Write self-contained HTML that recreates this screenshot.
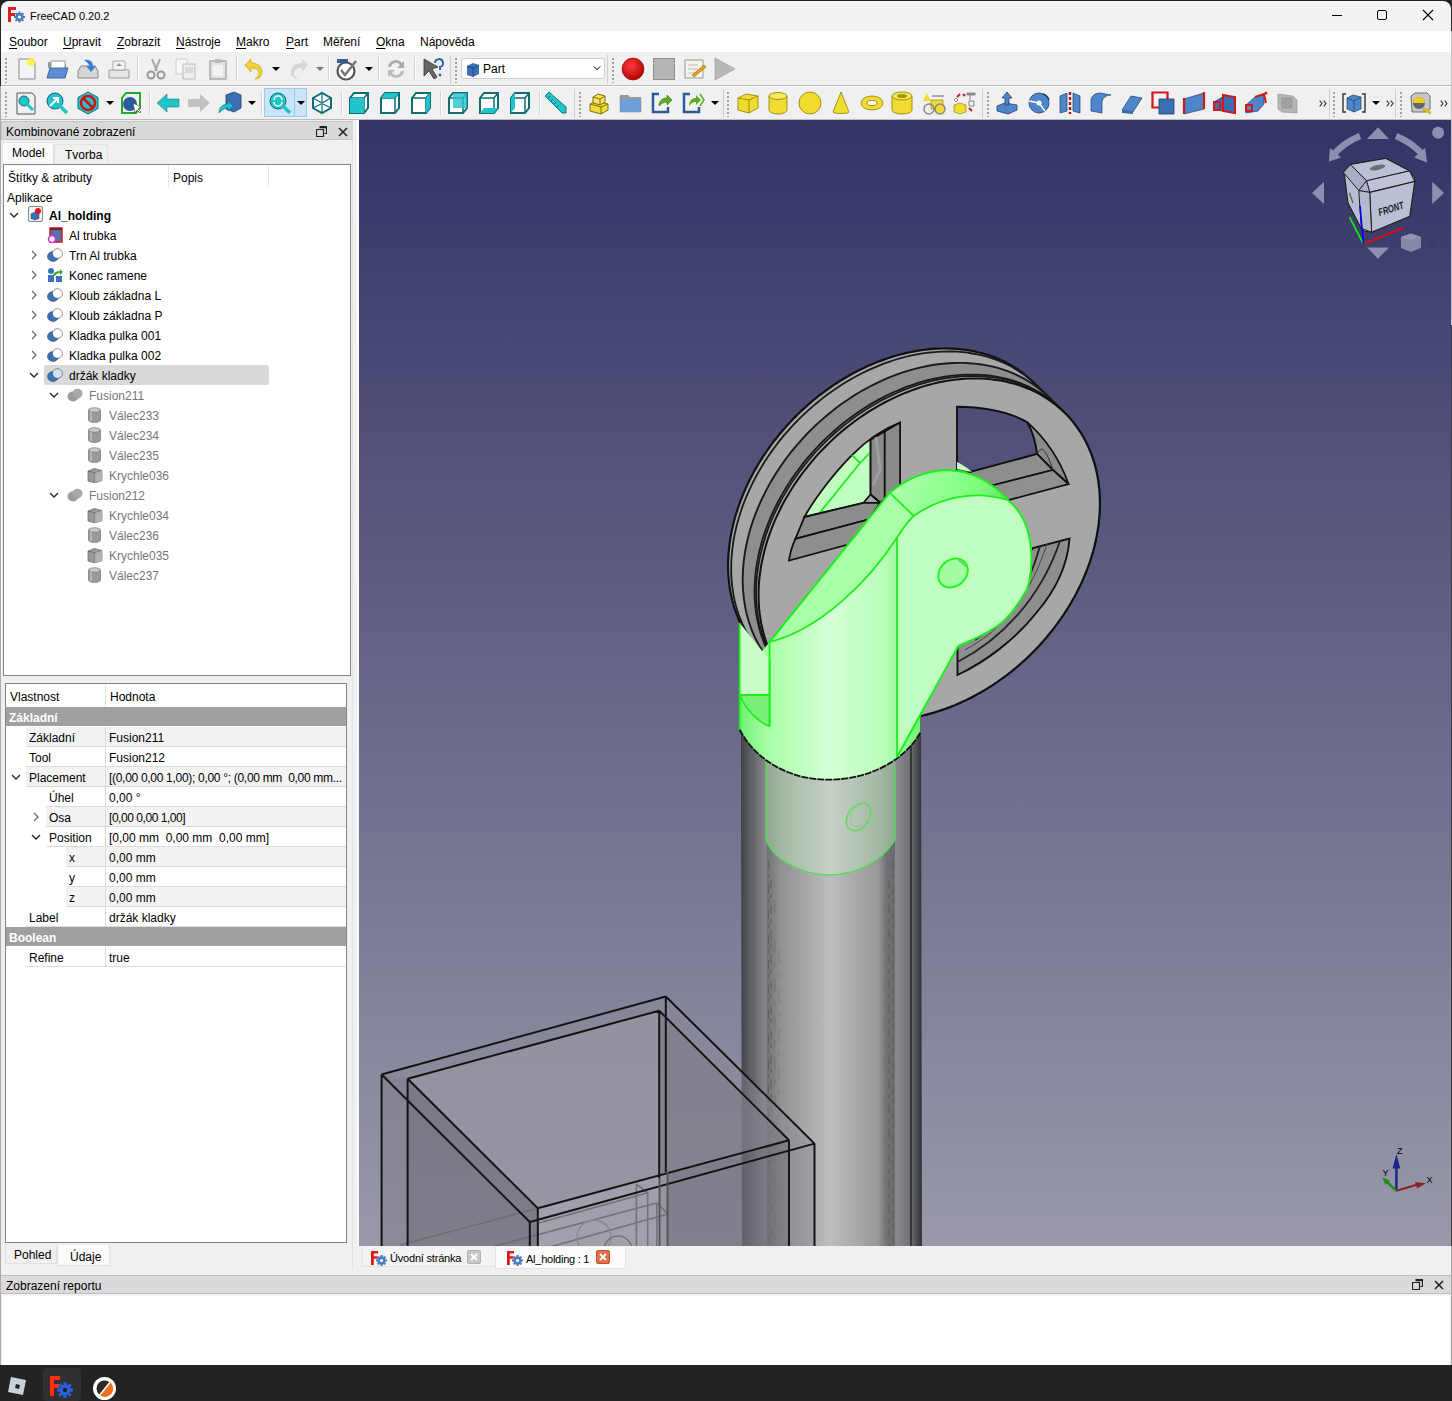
<!DOCTYPE html>
<html><head><meta charset="utf-8">
<style>
*{margin:0;padding:0;box-sizing:border-box}
html,body{width:1452px;height:1401px;overflow:hidden;background:#232323;font-family:"Liberation Sans",sans-serif;font-size:12px;color:#000}
.a{position:absolute}
#win{left:0;top:0;width:1452px;height:1365px;background:#f0f0f0;border-radius:8px 8px 0 0}
.u{text-decoration:underline;text-underline-offset:1.5px;text-decoration-thickness:1px}
.mi{top:4px;font-size:12px;line-height:14px;white-space:nowrap}
.grip{width:2px;background:repeating-linear-gradient(#f0f0f0 0 2px,#a0a0a0 2px 4px)}
.t{font-size:12px;line-height:14px;white-space:nowrap}
</style></head><body>
<div id="win" class="a">
<div class="a" style="left:0;top:0;width:1452px;height:31px;background:#1e1e24"></div><div class="a" style="left:1px;top:1px;width:1450px;height:30px;background:#f3f3f3;border-radius:8px 8px 0 0"></div>
<svg class="a" style="left:7px;top:6px" width="18" height="17" viewBox="0 0 18 17"><path d="M1 1h8v3H4v3h4v3H4v6H1z" fill="#d91f1f"/><g transform="translate(12.5 11)"><circle r="4.2" fill="#4a7cc0"/><path d="M0-5.5v2M0 5.5v-2M-5.5 0h2M5.5 0h-2M-3.9-3.9l1.4 1.4M3.9 3.9l-1.4-1.4M-3.9 3.9l1.4-1.4M3.9-3.9l-1.4 1.4" stroke="#4a7cc0" stroke-width="2"/><circle r="1.6" fill="#fff"/></g></svg>
<div class="a t" style="left:30px;top:9px;font-size:11px">FreeCAD 0.20.2</div>
<div class="a" style="left:1332px;top:15px;width:10px;height:1px;background:#000"></div>
<div class="a" style="left:1377px;top:10px;width:10px;height:10px;border:1px solid #000;border-radius:2px"></div>
<svg class="a" style="left:1422px;top:9px" width="12" height="12"><path d="M1 1L11 11M11 1L1 11" stroke="#000" stroke-width="1.1"/></svg>
<div class="a" style="left:1px;top:31px;width:1450px;height:21px;background:#fff"></div>
<span class="a mi" style="left:9px;top:35px"><span class="u">S</span>oubor</span>
<span class="a mi" style="left:63px;top:35px"><span class="u">U</span>pravit</span>
<span class="a mi" style="left:117px;top:35px"><span class="u">Z</span>obrazit</span>
<span class="a mi" style="left:176px;top:35px"><span class="u">N</span>ástroje</span>
<span class="a mi" style="left:236px;top:35px"><span class="u">M</span>akro</span>
<span class="a mi" style="left:286px;top:35px"><span class="u">P</span>art</span>
<span class="a mi" style="left:323px;top:35px">Měření</span>
<span class="a mi" style="left:376px;top:35px"><span class="u">O</span>kna</span>
<span class="a mi" style="left:420px;top:35px">Nápověda</span>
<div class="a" style="left:0px;top:52px;width:1452px;height:1px;background:#f0f0f0"></div>
<div class="a" style="left:0px;top:53px;width:1452px;height:32px;background:#f0f0f0"></div>
<div class="a" style="left:0px;top:85px;width:1452px;height:1px;background:#bababa"></div>
<div class="a" style="left:0px;top:86px;width:1452px;height:1px;background:#fff"></div>
<div class="a" style="left:0px;top:87px;width:1452px;height:32px;background:#f0f0f0"></div>
<div class="a" style="left:0px;top:119px;width:1452px;height:1px;background:#bababa"></div>
<div class="a grip" style="left:5px;top:56px;height:27px"></div>
<div class="a grip" style="left:5px;top:90px;height:27px"></div>
<svg class="a" style="left:14.7px;top:56.5px" width="24" height="24" viewBox="0 0 24 24"><path d="M4 2h13l3 3v17H4z" fill="#f4f4f4" stroke="#8a8a8a"/><circle cx="16" cy="5" r="4" fill="#ffee33" opacity=".85"/></svg>
<svg class="a" style="left:44.8px;top:56.5px" width="24" height="24" viewBox="0 0 24 24"><path d="M3 5h7l2 2h9v4H3z" fill="#9a9a9a"/><path d="M6 4h14v8H6z" fill="#fff" stroke="#999"/><path d="M2 21l3-10h18l-3 10z" fill="#5b8fd4" stroke="#3a6ab0"/></svg>
<svg class="a" style="left:75.8px;top:56.5px" width="24" height="24" viewBox="0 0 24 24"><path d="M2 14l3-5h14l3 5v7H2z" fill="#d5d5d5" stroke="#888"/><path d="M8 3c6-1 9 2 9 6h3l-5 6-5-6h3c0-2-2-4-5-6z" fill="#3f7fd0"/></svg>
<svg class="a" style="left:106.8px;top:56.5px" width="24" height="24" viewBox="0 0 24 24"><path d="M2 13h20v8H2z" fill="#e6e6e6" stroke="#999"/><path d="M6 4h12v9H6z" fill="#f4f4f4" stroke="#aaa"/><path d="M12 6l3 3h-6z" fill="#999"/></svg>
<div class="a" style="left:137px;top:57px;width:1px;height:24px;background:#d0d0d0;box-shadow:1px 0 0 #fff"></div>
<svg class="a" style="left:144.0px;top:56.5px" width="24" height="24" viewBox="0 0 24 24"><path d="M8 2l5 12M16 2l-5 12" stroke="#aaa" stroke-width="2"/><circle cx="7" cy="18" r="3.5" fill="none" stroke="#999" stroke-width="2"/><circle cx="17" cy="18" r="3.5" fill="none" stroke="#999" stroke-width="2"/></svg>
<svg class="a" style="left:174.4px;top:56.5px" width="24" height="24" viewBox="0 0 24 24"><path d="M2 2h11v15H2z" fill="#f6f6f6" stroke="#ccc"/><path d="M9 7h12v15H9z" fill="#eee" stroke="#bbb"/><path d="M11 10h8v6h-8z" fill="#d9d9d9"/></svg>
<svg class="a" style="left:205.8px;top:56.5px" width="24" height="24" viewBox="0 0 24 24"><path d="M4 4h16v18H4z" fill="#e2e2e2" stroke="#aaa" stroke-width="1.5"/><path d="M9 2h6v4H9z" fill="#bbb"/><path d="M7 8h10v11H7z" fill="#f2f2f2"/></svg>
<div class="a" style="left:236px;top:57px;width:1px;height:24px;background:#d0d0d0;box-shadow:1px 0 0 #fff"></div>
<svg class="a" style="left:242.0px;top:56.5px" width="24" height="24" viewBox="0 0 24 24"><path d="M3 8l6-6v4c7 0 11 4 11 9 0 4-3 7-7 7 3-2 4-4 4-6 0-3-3-5-8-5v4z" fill="#f0d040" stroke="#c9a800" stroke-width=".7"/></svg>
<svg class="a" style="left:272px;top:66.5px" width="8" height="4"><path d="M0 0h8L4 4z" fill="#000"/></svg>
<svg class="a" style="left:286.5px;top:56.5px" width="24" height="24" viewBox="0 0 24 24"><path d="M21 8l-6-6v4c-7 0-11 4-11 9 0 4 3 7 7 7-3-2-4-4-4-6 0-3 3-5 8-5v4z" fill="#d6d6d6"/></svg>
<svg class="a" style="left:315.6px;top:66.5px" width="8" height="4"><path d="M0 0h8L4 4z" fill="#777"/></svg>
<div class="a" style="left:328px;top:57px;width:1px;height:24px;background:#d0d0d0;box-shadow:1px 0 0 #fff"></div>
<svg class="a" style="left:335.0px;top:56.5px" width="24" height="24" viewBox="0 0 24 24"><circle cx="11" cy="14" r="8.5" fill="#fff" stroke="#555" stroke-width="2.2"/><path d="M6 13l4 5 11-14" stroke="#777" stroke-width="2.5" fill="none"/><path d="M2 2h11v4H2z" fill="#2f5d9a"/></svg>
<svg class="a" style="left:364.7px;top:66.5px" width="8" height="4"><path d="M0 0h8L4 4z" fill="#000"/></svg>
<div class="a" style="left:377.7px;top:57px;width:1px;height:24px;background:#d0d0d0;box-shadow:1px 0 0 #fff"></div>
<svg class="a" style="left:384.0px;top:56.5px" width="24" height="24" viewBox="0 0 24 24"><path d="M4 10a8 8 0 0 1 14-4l2-2v7h-7l3-3a5 5 0 0 0-9 2z" fill="#aaa"/><path d="M20 14a8 8 0 0 1-14 4l-2 2v-7h7l-3 3a5 5 0 0 0 9-2z" fill="#bbb"/></svg>
<div class="a" style="left:414.4px;top:57px;width:1px;height:24px;background:#d0d0d0;box-shadow:1px 0 0 #fff"></div>
<svg class="a" style="left:420.6px;top:56.5px" width="24" height="24" viewBox="0 0 24 24"><path d="M3 2l14 8-6 2 5 8-3 2-5-8-5 5z" fill="#666" stroke="#333" stroke-width=".8"/><path d="M14 6a4 4 0 1 1 5 4v3" stroke="#2f66b3" stroke-width="2" fill="none"/><circle cx="19" cy="18" r="1.4" fill="#2f66b3"/></svg>
<div class="a" style="left:450px;top:55px;width:1px;height:29px;background:#cfcfcf"></div>
<div class="a grip" style="left:455px;top:56px;height:27px"></div>
<div class="a" style="left:461px;top:58px;width:144px;height:21px;background:#fff;border:1px solid #cdcdcd;border-radius:3px"></div>
<svg class="a" style="left:465.0px;top:60.5px" width="16" height="16" viewBox="0 0 16 16"><path d="M2 5l6-3 6 2v9l-6 3-6-2z" fill="#3b6fb6"/><path d="M2 5l6 2 6-3M8 7v9" stroke="#1d3f73" fill="none" stroke-width=".8"/></svg>
<div class="a" style="left:483px;top:62px;font-size:12px">Part</div>
<svg class="a" style="left:592.5px;top:65.5px" width="8" height="6"><path d="M0.5 0.5L4 4L7.5 0.5M1 0.5L4 3.5L7 0.5" stroke="#555" fill="none" stroke-width="1"/></svg>
<div class="a" style="left:607px;top:55px;width:1px;height:29px;background:#cfcfcf"></div>
<div class="a grip" style="left:612px;top:56px;height:27px"></div>
<svg class="a" style="left:620.8px;top:56.5px" width="24" height="24" viewBox="0 0 24 24"><defs><radialGradient id="rg1" cx=".4" cy=".35" r=".7"><stop offset="0" stop-color="#ff3a3a"/><stop offset="1" stop-color="#b00000"/></radialGradient></defs><circle cx="12" cy="12" r="11" fill="url(#rg1)" stroke="#900" stroke-width=".6"/></svg>
<svg class="a" style="left:651.7px;top:56.5px" width="24" height="24" viewBox="0 0 24 24"><rect x="1.5" y="1.5" width="21" height="21" fill="#b5b5b5" stroke="#8f8f8f"/></svg>
<svg class="a" style="left:682.8px;top:56.5px" width="24" height="24" viewBox="0 0 24 24"><path d="M2 3h18v18H2z" fill="#f5f3ea" stroke="#999"/><path d="M5 8h10M5 12h10M5 16h8" stroke="#bbb"/><path d="M9 18l12-10 2 2-12 10z" fill="#e8a020" stroke="#a06000" stroke-width=".6"/></svg>
<svg class="a" style="left:713.0px;top:56.5px" width="24" height="24" viewBox="0 0 24 24"><path d="M2 1l20 11-20 11z" fill="#b8b8b8" stroke="#999" stroke-width=".6"/></svg>
<svg class="a" style="left:14.0px;top:90.5px" width="24" height="24" viewBox="0 0 24 24"><path d="M3 2h15l3 3v18H3z" fill="#f0f0ee" stroke="#555"/><circle cx="10" cy="10" r="5" fill="#22c4cc" stroke="#0f6d73"/><path d="M13 13l6 6" stroke="#22c4cc" stroke-width="3"/></svg>
<svg class="a" style="left:45.0px;top:90.5px" width="24" height="24" viewBox="0 0 24 24"><circle cx="10" cy="10" r="8" fill="#22c4cc" stroke="#0f6d73" stroke-width="1"/><path d="M15 15l7 7" stroke="#22c4cc" stroke-width="3.5"/><path d="M5 15l8-8M8 7h5v5" stroke="#fff" stroke-width="2" fill="none"/></svg>
<svg class="a" style="left:76.0px;top:90.5px" width="24" height="24" viewBox="0 0 24 24"><path d="M12 1l10 5.5v11L12 23 2 17.5v-11z" fill="#22c4cc" stroke="#0f6d73"/><circle cx="12" cy="12" r="7" fill="none" stroke="#d01010" stroke-width="2.5"/><path d="M7 7l10 10" stroke="#d01010" stroke-width="2.5"/></svg>
<svg class="a" style="left:105.8px;top:100.5px" width="8" height="4"><path d="M0 0h8L4 4z" fill="#000"/></svg>
<svg class="a" style="left:119.0px;top:90.5px" width="24" height="24" viewBox="0 0 24 24"><path d="M3 7l4-5h14v15l-4 5H3z" fill="none" stroke="#22aa22" stroke-width="2"/><circle cx="11" cy="13" r="7" fill="#2a5aa0"/><path d="M14 12l2 10 2-3 3 3 1-1-3-3 3-2z" fill="#fff" stroke="#333" stroke-width=".6"/></svg>
<div class="a" style="left:149.4px;top:91px;width:1px;height:24px;background:#d0d0d0;box-shadow:1px 0 0 #fff"></div>
<svg class="a" style="left:156.0px;top:90.5px" width="24" height="24" viewBox="0 0 24 24"><path d="M1 12l10-9v5h12v8H11v5z" fill="#22c4cc" stroke="#0f6d73" stroke-width=".5"/></svg>
<svg class="a" style="left:187.0px;top:90.5px" width="24" height="24" viewBox="0 0 24 24"><path d="M23 12l-10-9v5H1v8h12v5z" fill="#c2c2c2"/></svg>
<svg class="a" style="left:218.0px;top:90.5px" width="24" height="24" viewBox="0 0 24 24"><path d="M8 4l8-3 7 3v13l-7 4-8-3z" fill="#3a6eb5" stroke="#1d3f73" stroke-width=".8"/><path d="M1 22c0-6 4-9 9-9v-3l5 5-5 5v-3c-4 0-6 2-9 5z" fill="#22c4cc" stroke="#0f6d73" stroke-width=".6"/></svg>
<svg class="a" style="left:247.6px;top:100.5px" width="8" height="4"><path d="M0 0h8L4 4z" fill="#000"/></svg>
<div class="a" style="left:260.7px;top:91px;width:1px;height:24px;background:#d0d0d0;box-shadow:1px 0 0 #fff"></div>
<div class="a" style="left:264px;top:88px;width:43px;height:29px;background:#cce4f7;border:1px solid #99c9ef"></div>
<div class="a" style="left:294px;top:88px;width:1px;height:29px;background:#99c9ef"></div>
<svg class="a" style="left:267.6px;top:90.5px" width="24" height="24" viewBox="0 0 24 24"><circle cx="10" cy="10" r="8" fill="#22c4cc" stroke="#0f6d73"/><path d="M15 15l7 7" stroke="#22c4cc" stroke-width="3.5"/><path d="M6 9a4 4 0 0 1 8 0M14 11a4 4 0 0 1-8 0" stroke="#fff" stroke-width="1.5" fill="none"/></svg>
<svg class="a" style="left:296.5px;top:100.5px" width="8" height="4"><path d="M0 0h8L4 4z" fill="#000"/></svg>
<svg class="a" style="left:310.0px;top:90.5px" width="24" height="24" viewBox="0 0 24 24"><path d="M3 7l9-5 9 5v10l-9 5-9-5z" fill="#fff" stroke="#0f6d73" stroke-width="2"/><path d="M3 7l9 5 9-5M12 12v10M12 2v9M3 17l8-4M21 17l-8-4" stroke="#0f6d73" stroke-width="1.2" fill="none"/></svg>
<div class="a" style="left:340.7px;top:91px;width:1px;height:24px;background:#d0d0d0;box-shadow:1px 0 0 #fff"></div>
<svg class="a" style="left:346.8px;top:90.5px" width="24" height="24" viewBox="0 0 24 24"><path d="M3 7l4-5h14l0 15-4 5H3z" fill="#fff" stroke="#0f6d73" stroke-width="2"/><path d="M3 7h14v15M17 7l4-5" stroke="#0f6d73" stroke-width="1.5" fill="none"/><path d="M3 7h14v15H3z" fill="#22c4cc"/></svg>
<svg class="a" style="left:377.8px;top:90.5px" width="24" height="24" viewBox="0 0 24 24"><path d="M3 7l4-5h14l0 15-4 5H3z" fill="#fff" stroke="#0f6d73" stroke-width="2"/><path d="M3 7h14v15M17 7l4-5" stroke="#0f6d73" stroke-width="1.5" fill="none"/><path d="M3 7l4-5h14l-4 5z" fill="#22c4cc"/></svg>
<svg class="a" style="left:408.8px;top:90.5px" width="24" height="24" viewBox="0 0 24 24"><path d="M3 7l4-5h14l0 15-4 5H3z" fill="#fff" stroke="#0f6d73" stroke-width="2"/><path d="M3 7h14v15M17 7l4-5" stroke="#0f6d73" stroke-width="1.5" fill="none"/><path d="M17 7l4-5v15l-4 5z" fill="#22c4cc"/></svg>
<div class="a" style="left:439.7px;top:91px;width:1px;height:24px;background:#d0d0d0;box-shadow:1px 0 0 #fff"></div>
<svg class="a" style="left:445.8px;top:90.5px" width="24" height="24" viewBox="0 0 24 24"><path d="M3 7l4-5h14l0 15-4 5H3z" fill="#fff" stroke="#0f6d73" stroke-width="2"/><path d="M3 7h14v15M17 7l4-5" stroke="#0f6d73" stroke-width="1.5" fill="none"/><path d="M7 2h14v15H7z" fill="#22c4cc" opacity=".8"/></svg>
<svg class="a" style="left:477.0px;top:90.5px" width="24" height="24" viewBox="0 0 24 24"><path d="M3 7l4-5h14l0 15-4 5H3z" fill="#fff" stroke="#0f6d73" stroke-width="2"/><path d="M3 7h14v15M17 7l4-5" stroke="#0f6d73" stroke-width="1.5" fill="none"/><path d="M3 22l4-5h14l-4 5z" fill="#22c4cc"/></svg>
<svg class="a" style="left:507.6px;top:90.5px" width="24" height="24" viewBox="0 0 24 24"><path d="M3 7l4-5h14l0 15-4 5H3z" fill="#fff" stroke="#0f6d73" stroke-width="2"/><path d="M3 7h14v15M17 7l4-5" stroke="#0f6d73" stroke-width="1.5" fill="none"/><path d="M3 7l4-5v15l-4 5z" fill="#22c4cc"/></svg>
<div class="a" style="left:538.5px;top:91px;width:1px;height:24px;background:#d0d0d0;box-shadow:1px 0 0 #fff"></div>
<svg class="a" style="left:543.8px;top:90.5px" width="24" height="24" viewBox="0 0 24 24"><path d="M1 5l4-4 17 15v6l-4 0z" fill="#22c4cc" stroke="#0f6d73" stroke-width=".9"/><path d="M6 5l-2 2M9 8l-2 2M12 11l-2 2M15 14l-2 2" stroke="#0f6d73" stroke-width="1"/></svg>
<div class="a" style="left:574px;top:89px;width:1px;height:29px;background:#cfcfcf"></div>
<div class="a grip" style="left:579px;top:90px;height:27px"></div>
<svg class="a" style="left:588.0px;top:90.5px" width="24" height="24" viewBox="0 0 24 24"><path d="M2 13l6-3 12 3v6l-7 4-11-3z" fill="#f2dc3a" stroke="#6f6400" stroke-width=".9"/><path d="M2 13l11 3 7-3M13 16v7" stroke="#6f6400" stroke-width=".9" fill="none"/><path d="M5 6l5-3 7 2v6l-5 3-7-2z" fill="#f5e45a" stroke="#6f6400" stroke-width=".9"/><path d="M5 6l7 2 5-3M12 8v6" stroke="#6f6400" stroke-width=".9" fill="none"/></svg>
<svg class="a" style="left:618.7px;top:90.5px" width="24" height="24" viewBox="0 0 24 24"><path d="M1 5h8l2 2h11v14H1z" fill="#6e9fda" stroke="#888" stroke-width=".5"/><path d="M1 4h8l2 2h11v2H1z" fill="#999"/></svg>
<svg class="a" style="left:650.0px;top:90.5px" width="24" height="24" viewBox="0 0 24 24"><path d="M9 3H3v18h15v-5" stroke="#2b5a9a" stroke-width="2.5" fill="none"/><path d="M9 15c0-5 3-8 8-8V4l5 5-5 5v-3c-4 0-6 2-8 4z" fill="#5ab020" stroke="#2f6a10" stroke-width=".6"/></svg>
<svg class="a" style="left:681.0px;top:90.5px" width="24" height="24" viewBox="0 0 24 24"><path d="M9 3H3v18h15v-5" stroke="#2b5a9a" stroke-width="2.5" fill="none"/><path d="M8 15c0-5 3-8 7-8V4l5 5-5 5v-3c-4 0-5 2-7 4z" fill="#5ab020"/><path d="M19 3l4 6-4 6" stroke="#5ab020" stroke-width="1.5" fill="none"/></svg>
<svg class="a" style="left:710.6px;top:100.5px" width="8" height="4"><path d="M0 0h8L4 4z" fill="#000"/></svg>
<div class="a" style="left:722.5px;top:89px;width:1px;height:29px;background:#cfcfcf"></div>
<div class="a grip" style="left:727px;top:90px;height:27px"></div>
<svg class="a" style="left:736.0px;top:90.5px" width="24" height="24" viewBox="0 0 24 24"><path d="M2 7l8-4 12 2v12l-9 5-11-3z" fill="#f0dc30" stroke="#8c7c00" stroke-width=".8"/><path d="M2 7l11 2 9-4M13 9v13" stroke="#8c7c00" stroke-width=".8" fill="none"/></svg>
<svg class="a" style="left:766.0px;top:90.5px" width="24" height="24" viewBox="0 0 24 24"><path d="M3 5v14c0 2 4 4 9 4s9-2 9-4V5" fill="#f0dc30" stroke="#8c7c00" stroke-width=".8"/><ellipse cx="12" cy="5" rx="9" ry="3.5" fill="#f5e85a" stroke="#8c7c00" stroke-width=".8"/></svg>
<svg class="a" style="left:797.6px;top:90.5px" width="24" height="24" viewBox="0 0 24 24"><circle cx="12" cy="12" r="11" fill="#f0dc30" stroke="#8c7c00" stroke-width=".8"/></svg>
<svg class="a" style="left:829.0px;top:90.5px" width="24" height="24" viewBox="0 0 24 24"><path d="M12 1l8 20c0 2-16 2-16 0z" fill="#f0dc30" stroke="#8c7c00" stroke-width=".8"/></svg>
<svg class="a" style="left:860.0px;top:90.5px" width="24" height="24" viewBox="0 0 24 24"><ellipse cx="12" cy="12" rx="11" ry="7" fill="#f0dc30" stroke="#8c7c00" stroke-width=".8"/><ellipse cx="12" cy="12" rx="5" ry="2.5" fill="#fff" stroke="#8c7c00" stroke-width=".8"/></svg>
<svg class="a" style="left:890.0px;top:90.5px" width="24" height="24" viewBox="0 0 24 24"><path d="M2 5v14c0 2 4 4 10 4s10-2 10-4V5" fill="#f0dc30" stroke="#8c7c00" stroke-width=".8"/><ellipse cx="12" cy="5" rx="10" ry="4" fill="#f5e85a" stroke="#8c7c00" stroke-width=".8"/><ellipse cx="12" cy="5" rx="5" ry="2" fill="#a89600"/></svg>
<svg class="a" style="left:922.0px;top:90.5px" width="24" height="24" viewBox="0 0 24 24"><path d="M5 2l4 8H1z" fill="#f0dc30"/><path d="M10 4h12v2H10z" fill="#aaa"/><path d="M9 9h12v9H9z" fill="#f0dc30" stroke="#8c7c00" stroke-width=".6"/><circle cx="7" cy="18" r="5" fill="none" stroke="#888" stroke-width="1.5"/><circle cx="18" cy="18" r="5" fill="#f0dc30" stroke="#888" stroke-width="1.5"/></svg>
<svg class="a" style="left:952.0px;top:90.5px" width="24" height="24" viewBox="0 0 24 24"><path d="M2 14l6-2 6 2v7l-6 2-6-2z" fill="#f0dc30" stroke="#8c7c00" stroke-width=".6"/><path d="M15 2h8v2h-8zM18 4v5" stroke="#888" fill="#888"/><path d="M17 10h5v5h-5z" fill="none" stroke="#888"/><path d="M5 6l3-3M11 3l2 2M17 17l3 3" stroke="#d02020" stroke-width="2"/><path d="M2 9l2-2 2 2-2 2z" fill="none" stroke="#999"/></svg>
<div class="a" style="left:982px;top:89px;width:1px;height:29px;background:#cfcfcf"></div>
<div class="a grip" style="left:987px;top:90px;height:27px"></div>
<svg class="a" style="left:995.0px;top:90.5px" width="24" height="24" viewBox="0 0 24 24"><path d="M2 15l8-3 12 2v5l-9 4-11-3z" fill="#4f86c9" stroke="#1e3f6e" stroke-width=".8"/><path d="M12 1l5 6h-3v7h-4V7H7z" fill="#4f86c9" stroke="#1e3f6e" stroke-width=".8"/></svg>
<svg class="a" style="left:1026.7px;top:90.5px" width="24" height="24" viewBox="0 0 24 24"><circle cx="12" cy="12" r="10" fill="#4f86c9" stroke="#1e3f6e" stroke-width=".8"/><circle cx="12" cy="12" r="2.5" fill="#fff"/><path d="M12 12L2 10M12 12l6 8" stroke="#fff" stroke-width="1.5"/><path d="M16 3a9 9 0 0 1 6 6" stroke="#1e3f6e" stroke-width="1.5" fill="none"/></svg>
<svg class="a" style="left:1058.0px;top:90.5px" width="24" height="24" viewBox="0 0 24 24"><path d="M2 5l7-3v18l-7 2z" fill="#4f86c9" stroke="#1e3f6e" stroke-width=".7"/><path d="M22 5l-7-3v18l7 2z" fill="#4f86c9" stroke="#1e3f6e" stroke-width=".7"/><path d="M12 1v22" stroke="#c01010" stroke-width="2.4" stroke-dasharray="3 2"/></svg>
<svg class="a" style="left:1088.9px;top:90.5px" width="24" height="24" viewBox="0 0 24 24"><path d="M2 20V10c0-5 4-8 9-8l11 2c-5 0-9 3-9 8v10z" fill="#4f86c9" stroke="#1e3f6e" stroke-width=".7"/></svg>
<svg class="a" style="left:1119.7px;top:90.5px" width="24" height="24" viewBox="0 0 24 24"><path d="M2 19l9-14 11 2-9 14z" fill="#4f86c9" stroke="#1e3f6e" stroke-width=".7"/><path d="M2 19v3l11 1v-2" fill="#3a6aa8"/></svg>
<svg class="a" style="left:1151.0px;top:90.5px" width="24" height="24" viewBox="0 0 24 24"><path d="M1.5 1.5h15v15h-15z" fill="none" stroke="#d01818" stroke-width="2.2"/><path d="M8 8h15v15H8z" fill="#3a6eb5" stroke="#1e3f6e" stroke-width=".8"/></svg>
<svg class="a" style="left:1182.0px;top:90.5px" width="24" height="24" viewBox="0 0 24 24"><path d="M2 8l20-6v16L2 23z" fill="#4f86c9" stroke="#1e3f6e" stroke-width=".7"/><path d="M2 7v16M22 1v17" stroke="#d01818" stroke-width="2.2"/></svg>
<svg class="a" style="left:1212.8px;top:90.5px" width="24" height="24" viewBox="0 0 24 24"><path d="M1 11l10-6 11 2v15l-11-2-10-1z" fill="#3a6eb5" stroke="#1e3f6e" stroke-width=".7"/><path d="M1 11h6v8H1zM10 4l12 2v16l-12-2z" fill="none" stroke="#d01818" stroke-width="2"/></svg>
<svg class="a" style="left:1244.0px;top:90.5px" width="24" height="24" viewBox="0 0 24 24"><path d="M2 14l9-8 9-3v10l-6 7-12 2z" fill="#4f86c9" stroke="#1e3f6e" stroke-width=".7"/><path d="M2 14h6v6H2zM11 6l9-3 2 9" stroke="#d01818" stroke-width="2" fill="none"/><circle cx="22" cy="2" r="1.5" fill="#d01818"/></svg>
<svg class="a" style="left:1276.0px;top:90.5px" width="22" height="24" viewBox="0 0 22 24"><path d="M2 3l15 2 4 4v13L6 21 2 18z" fill="#b5b5b5" stroke="#999" stroke-width=".7"/><path d="M6 7h10v10H6z" fill="#a0a0a0" stroke="#888" stroke-width=".5"/></svg>
<svg class="a" style="left:1318.7px;top:99.5px" width="8" height="7"><path d="M0.7 0.7L3 3.5L0.7 6.3M4.7 0.7L7 3.5L4.7 6.3" stroke="#333" stroke-width="1.1" fill="none"/></svg>
<div class="a" style="left:1328.5px;top:89px;width:1px;height:29px;background:#cfcfcf"></div>
<div class="a grip" style="left:1333px;top:90px;height:27px"></div>
<svg class="a" style="left:1342.0px;top:90.5px" width="24" height="24" viewBox="0 0 24 24"><path d="M4 3H1v18h3M20 3h3v18h-3" stroke="#333" stroke-width="1.4" fill="none"/><path d="M5 7l6-3 8 2v12l-7 3-7-3z" fill="#4f86c9" stroke="#1e3f6e" stroke-width=".7"/><path d="M5 7l7 3 7-4M12 10v11" stroke="#1e3f6e" stroke-width=".7" fill="none"/></svg>
<svg class="a" style="left:1371.5px;top:100.5px" width="8" height="4"><path d="M0 0h8L4 4z" fill="#000"/></svg>
<svg class="a" style="left:1385.5px;top:99.5px" width="8" height="7"><path d="M0.7 0.7L3 3.5L0.7 6.3M4.7 0.7L7 3.5L4.7 6.3" stroke="#333" stroke-width="1.1" fill="none"/></svg>
<div class="a" style="left:1395px;top:89px;width:1px;height:29px;background:#cfcfcf"></div>
<div class="a grip" style="left:1400px;top:90px;height:27px"></div>
<svg class="a" style="left:1408.8px;top:90.5px" width="24" height="24" viewBox="0 0 24 24"><path d="M2 5l4-3h12l3 3v13l-4 3H3z" fill="#c8c8c8" stroke="#555" stroke-width=".8"/><circle cx="10" cy="12" r="6" fill="#666"/><path d="M4 12a6 6 0 0 1 12 0z" fill="#f0d020"/><path d="M15 17l7 4-1 2-7-4z" fill="#f0d020" stroke="#8a7a00" stroke-width=".5"/></svg>
<svg class="a" style="left:1440.4px;top:99.5px" width="8" height="7"><path d="M0.7 0.7L3 3.5L0.7 6.3M4.7 0.7L7 3.5L4.7 6.3" stroke="#333" stroke-width="1.1" fill="none"/></svg>
<div class="a" style="left:1px;top:120px;width:352px;height:1150px;background:#f0f0f0"></div>
<div class="a" style="left:352px;top:120px;width:1px;height:1149px;background:#e3e3e3"></div>
<div class="a" style="left:1px;top:121px;width:353px;height:19px;background:#d9d9d9;border:1px solid #c4c4c4"></div>
<div class="a t" style="left:6px;top:124.8px;">Kombinované zobrazení</div>
<svg class="a" style="left:316px;top:126px" width="11" height="11" viewBox="0 0 11 11"><path d="M3.5 0.5h7v7h-2M0.5 3.5h7v7h-7z" stroke="#222" fill="none" stroke-width="1.2"/><path d="M3.5 1.5h7" stroke="#222" stroke-width="1.5"/></svg>
<svg class="a" style="left:338px;top:127px" width="10" height="10" viewBox="0 0 10 10"><path d="M1 1l8 8M9 1l-8 8" stroke="#222" stroke-width="1.6"/></svg>
<div class="a" style="left:54px;top:144px;width:54px;height:20px;background:#f0f0f0;border:1px solid #e2e2e2;border-bottom:none"></div>
<div class="a" style="left:2px;top:142px;width:52px;height:22px;background:#fafafa;border:1px solid #e2e2e2;border-bottom:none"></div>
<div class="a t" style="left:12px;top:145.8px;">Model</div>
<div class="a t" style="left:65px;top:147.8px;">Tvorba</div>
<div class="a" style="left:3px;top:164px;width:348px;height:512px;background:#fff;border:1px solid #80858f"></div>
<div class="a" style="left:168px;top:165px;width:1px;height:22px;background:#e6e6e6"></div>
<div class="a" style="left:268px;top:165px;width:1px;height:22px;background:#e6e6e6"></div>
<div class="a t" style="left:8px;top:170.8px;">Štítky &amp; atributy</div>
<div class="a t" style="left:173px;top:170.8px;">Popis</div>
<div class="a t" style="left:7px;top:190.8px;">Aplikace</div>
<div class="a" style="left:44px;top:365px;width:225px;height:20px;background:#d9d9d9;border-radius:2px"></div>
<svg class="a" style="left:8.5px;top:212.3px" width="10" height="6" viewBox="0 0 10 6"><path d="M1 1l4 4 4-4" stroke="#222" stroke-width="1.3" fill="none"/></svg>
<svg class="a" style="left:28px;top:206px" width="15" height="16" viewBox="0 0 15 16"><rect x=".5" y=".5" width="14" height="15" rx="1.5" fill="#f4f4f4" stroke="#888"/><path d="M3 8l4-2 4 1.5v5L7 14 3 12.5z" fill="#3d6fb3" stroke="#1e3f6e" stroke-width=".5"/><circle cx="10" cy="5" r="3" fill="#e01818"/></svg>
<div class="a t" style="left:49px;top:209.1px;color:#000"><b>Al_holding</b></div>
<svg class="a" style="left:47px;top:227px" width="16" height="16" viewBox="0 0 16 16"><rect x="3" y="1" width="12" height="14" fill="#5272a8" stroke="#c02020" stroke-width="1.5"/><path d="M3 2h12" stroke="#8b1a1a" stroke-width="2"/><circle cx="5" cy="12" r="3.5" fill="#fff" stroke="#e020e0" stroke-width="1.5"/></svg>
<div class="a t" style="left:69px;top:229.1px;color:#000">Al trubka</div>
<svg class="a" style="left:30.5px;top:250.3px" width="6" height="10" viewBox="0 0 6 10"><path d="M1 1l4 4-4 4" stroke="#666" stroke-width="1.2" fill="none"/></svg>
<svg class="a" style="left:47px;top:248px" width="16" height="14" viewBox="0 0 16 14"><ellipse cx="6" cy="8.5" rx="5.5" ry="5" fill="#3b72bd" stroke="#333" stroke-width=".5"/><ellipse cx="10.5" cy="5.5" rx="5" ry="4.8" fill="#fff" stroke="#333" stroke-width=".5"/></svg>
<div class="a t" style="left:69px;top:249.1px;color:#000">Trn Al trubka</div>
<svg class="a" style="left:30.5px;top:270.3px" width="6" height="10" viewBox="0 0 6 10"><path d="M1 1l4 4-4 4" stroke="#666" stroke-width="1.2" fill="none"/></svg>
<svg class="a" style="left:47px;top:267px" width="16" height="16" viewBox="0 0 16 16"><circle cx="4" cy="4" r="3" fill="#3b72bd"/><rect x="1" y="8" width="6" height="7" fill="#3b72bd"/><rect x="9" y="9" width="6" height="6" fill="#3b72bd"/><path d="M6 8c1-3 4-4 7-4V2l3 3-3 3V6c-2 0-4 1-5 3z" fill="#3faa2a"/></svg>
<div class="a t" style="left:69px;top:269.1px;color:#000">Konec ramene</div>
<svg class="a" style="left:30.5px;top:290.3px" width="6" height="10" viewBox="0 0 6 10"><path d="M1 1l4 4-4 4" stroke="#666" stroke-width="1.2" fill="none"/></svg>
<svg class="a" style="left:47px;top:288px" width="16" height="14" viewBox="0 0 16 14"><ellipse cx="6" cy="8.5" rx="5.5" ry="5" fill="#3b72bd" stroke="#333" stroke-width=".5"/><ellipse cx="10.5" cy="5.5" rx="5" ry="4.8" fill="#fff" stroke="#333" stroke-width=".5"/></svg>
<div class="a t" style="left:69px;top:289.1px;color:#000">Kloub základna L</div>
<svg class="a" style="left:30.5px;top:310.3px" width="6" height="10" viewBox="0 0 6 10"><path d="M1 1l4 4-4 4" stroke="#666" stroke-width="1.2" fill="none"/></svg>
<svg class="a" style="left:47px;top:308px" width="16" height="14" viewBox="0 0 16 14"><ellipse cx="6" cy="8.5" rx="5.5" ry="5" fill="#3b72bd" stroke="#333" stroke-width=".5"/><ellipse cx="10.5" cy="5.5" rx="5" ry="4.8" fill="#fff" stroke="#333" stroke-width=".5"/></svg>
<div class="a t" style="left:69px;top:309.1px;color:#000">Kloub základna P</div>
<svg class="a" style="left:30.5px;top:330.3px" width="6" height="10" viewBox="0 0 6 10"><path d="M1 1l4 4-4 4" stroke="#666" stroke-width="1.2" fill="none"/></svg>
<svg class="a" style="left:47px;top:328px" width="16" height="14" viewBox="0 0 16 14"><ellipse cx="6" cy="8.5" rx="5.5" ry="5" fill="#3b72bd" stroke="#333" stroke-width=".5"/><ellipse cx="10.5" cy="5.5" rx="5" ry="4.8" fill="#fff" stroke="#333" stroke-width=".5"/></svg>
<div class="a t" style="left:69px;top:329.1px;color:#000">Kladka pulka 001</div>
<svg class="a" style="left:30.5px;top:350.3px" width="6" height="10" viewBox="0 0 6 10"><path d="M1 1l4 4-4 4" stroke="#666" stroke-width="1.2" fill="none"/></svg>
<svg class="a" style="left:47px;top:348px" width="16" height="14" viewBox="0 0 16 14"><ellipse cx="6" cy="8.5" rx="5.5" ry="5" fill="#3b72bd" stroke="#333" stroke-width=".5"/><ellipse cx="10.5" cy="5.5" rx="5" ry="4.8" fill="#fff" stroke="#333" stroke-width=".5"/></svg>
<div class="a t" style="left:69px;top:349.1px;color:#000">Kladka pulka 002</div>
<svg class="a" style="left:28.5px;top:372.3px" width="10" height="6" viewBox="0 0 10 6"><path d="M1 1l4 4 4-4" stroke="#222" stroke-width="1.3" fill="none"/></svg>
<svg class="a" style="left:47px;top:368px" width="16" height="14" viewBox="0 0 16 14"><ellipse cx="6" cy="8.5" rx="5.5" ry="5" fill="#3b72bd" stroke="#333" stroke-width=".5"/><ellipse cx="10.5" cy="5.5" rx="5" ry="4.8" fill="#cfe3f7" stroke="#333" stroke-width=".5"/></svg>
<div class="a t" style="left:69px;top:369.1px;color:#000">držák kladky</div>
<svg class="a" style="left:49px;top:392.3px" width="10" height="6" viewBox="0 0 10 6"><path d="M1 1l4 4 4-4" stroke="#222" stroke-width="1.3" fill="none"/></svg>
<svg class="a" style="left:67px;top:388px" width="16" height="14" viewBox="0 0 16 14"><ellipse cx="6" cy="8.5" rx="5.5" ry="5" fill="#9c9c9c"/><ellipse cx="10.5" cy="5.5" rx="5" ry="4.8" fill="#a9a9a9"/></svg>
<div class="a t" style="left:89px;top:389.1px;color:#777">Fusion211</div>
<svg class="a" style="left:87px;top:407px" width="15" height="16" viewBox="0 0 15 16"><path d="M1.5 3v10c0 1.5 3 2.5 6 2.5s6-1 6-2.5V3" fill="#9a9a9a" stroke="#666" stroke-width=".6"/><ellipse cx="7.5" cy="3" rx="6" ry="2.3" fill="#c8c8c8" stroke="#666" stroke-width=".6"/><path d="M4 5v9" stroke="#b5b5b5" stroke-width="2"/></svg>
<div class="a t" style="left:109px;top:409.1px;color:#777">Válec233</div>
<svg class="a" style="left:87px;top:427px" width="15" height="16" viewBox="0 0 15 16"><path d="M1.5 3v10c0 1.5 3 2.5 6 2.5s6-1 6-2.5V3" fill="#9a9a9a" stroke="#666" stroke-width=".6"/><ellipse cx="7.5" cy="3" rx="6" ry="2.3" fill="#c8c8c8" stroke="#666" stroke-width=".6"/><path d="M4 5v9" stroke="#b5b5b5" stroke-width="2"/></svg>
<div class="a t" style="left:109px;top:429.1px;color:#777">Válec234</div>
<svg class="a" style="left:87px;top:447px" width="15" height="16" viewBox="0 0 15 16"><path d="M1.5 3v10c0 1.5 3 2.5 6 2.5s6-1 6-2.5V3" fill="#9a9a9a" stroke="#666" stroke-width=".6"/><ellipse cx="7.5" cy="3" rx="6" ry="2.3" fill="#c8c8c8" stroke="#666" stroke-width=".6"/><path d="M4 5v9" stroke="#b5b5b5" stroke-width="2"/></svg>
<div class="a t" style="left:109px;top:449.1px;color:#777">Válec235</div>
<svg class="a" style="left:87px;top:467px" width="16" height="16" viewBox="0 0 16 16"><path d="M1 4l6-2.5 8 2v10l-7 2.5L1 14z" fill="#9a9a9a" stroke="#555" stroke-width=".6"/><path d="M1 4l7 2 7-2.5M8 6v10" stroke="#555" stroke-width=".6" fill="none"/><path d="M8 6l7-2.5v10L8 16z" fill="#b0b0b0"/></svg>
<div class="a t" style="left:109px;top:469.1px;color:#777">Krychle036</div>
<svg class="a" style="left:49px;top:492.3px" width="10" height="6" viewBox="0 0 10 6"><path d="M1 1l4 4 4-4" stroke="#222" stroke-width="1.3" fill="none"/></svg>
<svg class="a" style="left:67px;top:488px" width="16" height="14" viewBox="0 0 16 14"><ellipse cx="6" cy="8.5" rx="5.5" ry="5" fill="#9c9c9c"/><ellipse cx="10.5" cy="5.5" rx="5" ry="4.8" fill="#a9a9a9"/></svg>
<div class="a t" style="left:89px;top:489.1px;color:#777">Fusion212</div>
<svg class="a" style="left:87px;top:507px" width="16" height="16" viewBox="0 0 16 16"><path d="M1 4l6-2.5 8 2v10l-7 2.5L1 14z" fill="#9a9a9a" stroke="#555" stroke-width=".6"/><path d="M1 4l7 2 7-2.5M8 6v10" stroke="#555" stroke-width=".6" fill="none"/><path d="M8 6l7-2.5v10L8 16z" fill="#b0b0b0"/></svg>
<div class="a t" style="left:109px;top:509.1px;color:#777">Krychle034</div>
<svg class="a" style="left:87px;top:527px" width="15" height="16" viewBox="0 0 15 16"><path d="M1.5 3v10c0 1.5 3 2.5 6 2.5s6-1 6-2.5V3" fill="#9a9a9a" stroke="#666" stroke-width=".6"/><ellipse cx="7.5" cy="3" rx="6" ry="2.3" fill="#c8c8c8" stroke="#666" stroke-width=".6"/><path d="M4 5v9" stroke="#b5b5b5" stroke-width="2"/></svg>
<div class="a t" style="left:109px;top:529.1px;color:#777">Válec236</div>
<svg class="a" style="left:87px;top:547px" width="16" height="16" viewBox="0 0 16 16"><path d="M1 4l6-2.5 8 2v10l-7 2.5L1 14z" fill="#9a9a9a" stroke="#555" stroke-width=".6"/><path d="M1 4l7 2 7-2.5M8 6v10" stroke="#555" stroke-width=".6" fill="none"/><path d="M8 6l7-2.5v10L8 16z" fill="#b0b0b0"/></svg>
<div class="a t" style="left:109px;top:549.1px;color:#777">Krychle035</div>
<svg class="a" style="left:87px;top:567px" width="15" height="16" viewBox="0 0 15 16"><path d="M1.5 3v10c0 1.5 3 2.5 6 2.5s6-1 6-2.5V3" fill="#9a9a9a" stroke="#666" stroke-width=".6"/><ellipse cx="7.5" cy="3" rx="6" ry="2.3" fill="#c8c8c8" stroke="#666" stroke-width=".6"/><path d="M4 5v9" stroke="#b5b5b5" stroke-width="2"/></svg>
<div class="a t" style="left:109px;top:569.1px;color:#777">Válec237</div>
<div class="a" style="left:5px;top:683px;width:342px;height:560px;background:#fff;border:1px solid #80858f"></div>
<div class="a" style="left:105px;top:684px;width:1px;height:23px;background:#e6e6e6"></div>
<div class="a t" style="left:10px;top:689.8px;">Vlastnost</div>
<div class="a t" style="left:110px;top:689.8px;">Hodnota</div>
<div class="a" style="left:6px;top:707px;width:340px;height:19px;background:#a0a0a0"></div>
<div class="a t" style="left:9px;top:710.8px;color:#fff"><b>Základní</b></div>
<div class="a" style="left:26px;top:727px;width:320px;height:19px;background:#f3f3f3"></div>
<div class="a" style="left:26px;top:746px;width:320px;height:1px;background:#dcdcdc"></div>
<div class="a" style="left:105px;top:727px;width:1px;height:20px;background:#dcdcdc"></div>
<div class="a t" style="left:29px;top:731.3px;">Základní</div>
<div class="a t" style="left:109px;top:731.3px;letter-spacing:0px">Fusion211</div>
<div class="a" style="left:26px;top:747px;width:320px;height:19px;background:#fff"></div>
<div class="a" style="left:26px;top:766px;width:320px;height:1px;background:#dcdcdc"></div>
<div class="a" style="left:105px;top:747px;width:1px;height:20px;background:#dcdcdc"></div>
<div class="a t" style="left:29px;top:751.3px;">Tool</div>
<div class="a t" style="left:109px;top:751.3px;letter-spacing:0px">Fusion212</div>
<div class="a" style="left:26px;top:767px;width:320px;height:19px;background:#f3f3f3"></div>
<div class="a" style="left:26px;top:786px;width:320px;height:1px;background:#dcdcdc"></div>
<div class="a" style="left:105px;top:767px;width:1px;height:20px;background:#dcdcdc"></div>
<div class="a t" style="left:29px;top:771.3px;">Placement</div>
<div class="a t" style="left:109px;top:771.3px;letter-spacing:-0.3px">[(0,00 0,00 1,00); 0,00 °; (0,00 mm&nbsp; 0,00 mm...</div>
<svg class="a" style="left:10.5px;top:773.5px" width="10" height="6" viewBox="0 0 10 6"><path d="M1 1l4 4 4-4" stroke="#222" stroke-width="1.3" fill="none"/></svg>
<div class="a" style="left:46px;top:787px;width:300px;height:19px;background:#fff"></div>
<div class="a" style="left:46px;top:806px;width:300px;height:1px;background:#dcdcdc"></div>
<div class="a" style="left:105px;top:787px;width:1px;height:20px;background:#dcdcdc"></div>
<div class="a t" style="left:49px;top:791.3px;">Úhel</div>
<div class="a t" style="left:109px;top:791.3px;letter-spacing:0px">0,00 °</div>
<div class="a" style="left:46px;top:807px;width:300px;height:19px;background:#f3f3f3"></div>
<div class="a" style="left:46px;top:826px;width:300px;height:1px;background:#dcdcdc"></div>
<div class="a" style="left:105px;top:807px;width:1px;height:20px;background:#dcdcdc"></div>
<div class="a t" style="left:49px;top:811.3px;">Osa</div>
<div class="a t" style="left:109px;top:811.3px;letter-spacing:-0.45px">[0,00 0,00 1,00]</div>
<svg class="a" style="left:33px;top:811.5px" width="6" height="10" viewBox="0 0 6 10"><path d="M1 1l4 4-4 4" stroke="#666" stroke-width="1.2" fill="none"/></svg>
<div class="a" style="left:46px;top:827px;width:300px;height:19px;background:#fff"></div>
<div class="a" style="left:46px;top:846px;width:300px;height:1px;background:#dcdcdc"></div>
<div class="a" style="left:105px;top:827px;width:1px;height:20px;background:#dcdcdc"></div>
<div class="a t" style="left:49px;top:831.3px;">Position</div>
<div class="a t" style="left:109px;top:831.3px;letter-spacing:0px">[0,00 mm&nbsp; 0,00 mm&nbsp; 0,00 mm]</div>
<svg class="a" style="left:30.5px;top:833.5px" width="10" height="6" viewBox="0 0 10 6"><path d="M1 1l4 4 4-4" stroke="#222" stroke-width="1.3" fill="none"/></svg>
<div class="a" style="left:66px;top:847px;width:280px;height:19px;background:#f3f3f3"></div>
<div class="a" style="left:66px;top:866px;width:280px;height:1px;background:#dcdcdc"></div>
<div class="a" style="left:105px;top:847px;width:1px;height:20px;background:#dcdcdc"></div>
<div class="a t" style="left:69px;top:851.3px;">x</div>
<div class="a t" style="left:109px;top:851.3px;letter-spacing:0px">0,00 mm</div>
<div class="a" style="left:66px;top:867px;width:280px;height:19px;background:#fff"></div>
<div class="a" style="left:66px;top:886px;width:280px;height:1px;background:#dcdcdc"></div>
<div class="a" style="left:105px;top:867px;width:1px;height:20px;background:#dcdcdc"></div>
<div class="a t" style="left:69px;top:871.3px;">y</div>
<div class="a t" style="left:109px;top:871.3px;letter-spacing:0px">0,00 mm</div>
<div class="a" style="left:66px;top:887px;width:280px;height:19px;background:#f3f3f3"></div>
<div class="a" style="left:66px;top:906px;width:280px;height:1px;background:#dcdcdc"></div>
<div class="a" style="left:105px;top:887px;width:1px;height:20px;background:#dcdcdc"></div>
<div class="a t" style="left:69px;top:891.3px;">z</div>
<div class="a t" style="left:109px;top:891.3px;letter-spacing:0px">0,00 mm</div>
<div class="a" style="left:26px;top:907px;width:320px;height:19px;background:#fff"></div>
<div class="a" style="left:26px;top:926px;width:320px;height:1px;background:#dcdcdc"></div>
<div class="a" style="left:105px;top:907px;width:1px;height:20px;background:#dcdcdc"></div>
<div class="a t" style="left:29px;top:911.3px;">Label</div>
<div class="a t" style="left:109px;top:911.3px;letter-spacing:0px">držák kladky</div>
<div class="a" style="left:6px;top:927px;width:340px;height:19px;background:#a0a0a0"></div>
<div class="a t" style="left:9px;top:930.8px;color:#fff"><b>Boolean</b></div>
<div class="a" style="left:26px;top:947px;width:320px;height:19px;background:#fff"></div>
<div class="a" style="left:26px;top:966px;width:320px;height:1px;background:#dcdcdc"></div>
<div class="a" style="left:105px;top:947px;width:1px;height:20px;background:#dcdcdc"></div>
<div class="a t" style="left:29px;top:951.3px;">Refine</div>
<div class="a t" style="left:109px;top:951.3px;letter-spacing:0px">true</div>
<div class="a" style="left:57px;top:1245px;width:53px;height:21px;background:#fafafa;border:1px solid #e2e2e2;border-top:none"></div>
<div class="a" style="left:5px;top:1245px;width:52px;height:19px;background:#f0f0f0;border:1px solid #e2e2e2;border-top:none"></div>
<div class="a t" style="left:14px;top:1247.8px;">Pohled</div>
<div class="a t" style="left:70px;top:1249.8px;">Údaje</div>
<svg class="a" style="left:359px;top:120px" width="1093" height="1126" viewBox="0 0 1093 1126">
<defs>
<linearGradient id="bg" x1="0" y1="0" x2="0" y2="1126" gradientUnits="userSpaceOnUse"><stop offset="0" stop-color="#333366"/><stop offset="1" stop-color="#9999aa"/></linearGradient>
<linearGradient id="pipe" x1="382" y1="0" x2="562" y2="0" gradientUnits="userSpaceOnUse"><stop offset="0.0000" stop-color="#303036"/><stop offset="0.0083" stop-color="#47474e"/><stop offset="0.1389" stop-color="#88888e"/><stop offset="0.1444" stop-color="#707072"/><stop offset="0.2167" stop-color="#909092"/><stop offset="0.4944" stop-color="#bdbdbf"/><stop offset="0.7611" stop-color="#98989a"/><stop offset="0.8111" stop-color="#707072"/><stop offset="0.8528" stop-color="#6c6c6e"/><stop offset="0.8583" stop-color="#8a8a90"/><stop offset="0.9389" stop-color="#727278"/><stop offset="0.9417" stop-color="#36363a"/><stop offset="0.9500" stop-color="#36363a"/><stop offset="0.9528" stop-color="#64646c"/><stop offset="0.9944" stop-color="#3a3a40"/><stop offset="1.0000" stop-color="#36363c"/></linearGradient>
<linearGradient id="gcyl" x1="380" y1="0" x2="562" y2="0" gradientUnits="userSpaceOnUse"><stop offset="0" stop-color="#70f070"/><stop offset=".16" stop-color="#a8ffa8"/><stop offset=".5" stop-color="#d6ffd6"/><stop offset=".8" stop-color="#b8ffb8"/><stop offset="1" stop-color="#70f070"/></linearGradient>
<linearGradient id="gtop" x1="541" y1="350" x2="651" y2="400" gradientUnits="userSpaceOnUse"><stop offset="0" stop-color="#b0ffb0"/><stop offset=".6" stop-color="#80ff80"/><stop offset="1" stop-color="#60e060"/></linearGradient>
<linearGradient id="ginner" x1="407" y1="0" x2="536" y2="0" gradientUnits="userSpaceOnUse"><stop offset="0" stop-color="#92aa92"/><stop offset=".15" stop-color="#a8bca8"/><stop offset=".5" stop-color="#c6d2c6"/><stop offset=".85" stop-color="#a8bca8"/><stop offset="1" stop-color="#94ac94"/></linearGradient>
<linearGradient id="groove" x1="401" y1="440" x2="581" y2="260" gradientUnits="userSpaceOnUse"><stop offset="0" stop-color="#5a5a5a"/><stop offset=".5" stop-color="#7a7a7a"/><stop offset="1" stop-color="#8a8a8a"/></linearGradient>
</defs>
<rect width="1093" height="1126" fill="url(#bg)"/>
<path d="M705.1,292.3 L706.7,293.9 L708.3,295.6 L709.9,297.2 L711.4,299.0 L712.9,300.7 L714.4,302.5 L715.8,304.3 L717.2,306.2 L718.5,308.1 L719.8,310.0 L721.1,311.9 L722.3,313.9 L723.5,315.9 L724.7,317.9 L725.8,319.9 L726.9,322.0 L728.0,324.1 L729.0,326.3 L729.9,328.4 L730.8,330.6 L731.7,332.8 L732.6,335.0 L733.4,337.3 L734.2,339.6 L734.9,341.9 L735.6,344.2 L736.2,346.5 L736.8,348.9 L737.4,351.3 L737.9,353.7 L738.4,356.1 L738.8,358.6 L739.2,361.0 L739.5,363.5 L739.9,366.0 L740.1,368.5 L740.4,371.0 L740.5,373.5 L740.7,376.1 L740.8,378.6 L740.8,381.2 L740.8,383.8 L740.8,386.4 L740.7,389.0 L740.6,391.6 L740.5,394.3 L740.3,396.9 L740.0,399.5 L739.8,402.2 L739.4,404.9 L739.1,407.5 L738.7,410.2 L738.2,412.9 L737.7,415.5 L737.2,418.2 L736.6,420.9 L736.0,423.6 L735.4,426.3 L734.7,429.0 L733.9,431.7 L733.1,434.4 L732.3,437.0 L731.5,439.7 L730.6,442.4 L729.6,445.1 L728.6,447.8 L727.6,450.4 L726.6,453.1 L725.5,455.8 L724.3,458.4 L723.2,461.1 L722.0,463.7 L720.7,466.3 L719.4,469.0 L718.1,471.6 L716.8,474.2 L715.4,476.8 L713.9,479.3 L712.5,481.9 L711.0,484.5 L709.4,487.0 L707.9,489.5 L706.2,492.0 L704.6,494.5 L702.9,497.0 L701.2,499.5 L699.5,501.9 L697.7,504.3 L695.9,506.7 L694.1,509.1 L692.2,511.5 L690.3,513.8 L688.4,516.2 L686.5,518.5 L684.5,520.8 L682.5,523.0 L680.4,525.3 L678.4,527.5 L676.3,529.7 L674.2,531.8 L672.0,534.0 L669.8,536.1 L667.6,538.2 L665.4,540.2 L663.2,542.2 L660.9,544.3 L658.6,546.2 L656.3,548.2 L654.0,550.1 L651.6,552.0 L649.3,553.8 L646.9,555.7 L644.5,557.5 L642.0,559.2 L639.6,560.9 L637.1,562.6 L634.7,564.3 L632.2,565.9 L629.6,567.5 L627.1,569.1 L624.6,570.6 L622.0,572.1 L619.5,573.6 L616.9,575.0 L614.3,576.4 L611.7,577.7 L609.1,579.0 L606.5,580.3 L603.8,581.6 L601.2,582.8 L598.5,583.9 L595.9,585.0 L593.2,586.1 L590.6,587.2 L587.9,588.2 L585.2,589.1 L582.5,590.1 L579.9,591.0 L577.2,591.8 L574.5,592.6 L571.8,593.4 L569.1,594.1 L566.4,594.8 L563.7,595.4 L561.1,596.0 L558.4,596.6 L555.7,597.1 L553.0,597.6 L550.3,598.0 L547.7,598.4 L545.0,598.8 L542.4,599.1 L539.7,599.4 L537.1,599.6 L534.4,599.8 L531.8,599.9 L529.2,600.0 L526.6,600.1 L524.0,600.1 L521.4,600.1 L518.9,600.0 L516.3,599.9 L513.8,599.7 L511.2,599.5 L508.7,599.3 L506.2,599.0 L503.7,598.7 L501.3,598.3 L498.8,597.9 L496.4,597.5 L494.0,597.0 L491.6,596.5 L489.2,595.9 L486.8,595.3 L484.5,594.6 L482.2,593.9 L479.9,593.2 L477.6,592.4 L475.4,591.6 L473.2,590.7 L471.0,589.8 L468.8,588.9 L466.7,587.9 L464.5,586.9 L462.4,585.8 L460.4,584.8 L458.3,583.6 L456.3,582.4 L454.3,581.2 L452.4,580.0 L450.4,578.7 L448.5,577.4 L446.7,576.0 L444.8,574.6 L443.0,573.2 L441.2,571.7 L439.5,570.2 L437.8,568.7 L436.1,567.1 L434.5,565.5 L403.4,534.4 L401.8,532.8 L400.2,531.1 L398.7,529.4 L397.2,527.7 L395.7,526.0 L394.3,524.2 L392.9,522.4 L391.6,520.5 L390.3,518.6 L389.0,516.7 L387.8,514.8 L386.6,512.8 L385.4,510.8 L384.3,508.8 L383.2,506.8 L382.2,504.7 L381.1,502.6 L380.2,500.5 L379.2,498.3 L378.4,496.1 L377.5,493.9 L376.7,491.7 L375.9,489.5 L375.2,487.2 L374.5,484.9 L373.9,482.6 L373.2,480.2 L372.7,477.9 L372.2,475.5 L371.7,473.1 L371.2,470.7 L370.8,468.3 L370.5,465.8 L370.2,463.4 L369.9,460.9 L369.6,458.4 L369.5,455.9 L369.3,453.4 L369.2,450.8 L369.1,448.3 L369.1,445.7 L369.1,443.1 L369.2,440.5 L369.3,437.9 L369.4,435.3 L369.6,432.7 L369.9,430.1 L370.1,427.4 L370.4,424.8 L370.8,422.2 L371.2,419.5 L371.6,416.9 L372.1,414.2 L372.6,411.5 L373.2,408.9 L373.8,406.2 L374.4,403.5 L375.1,400.8 L375.8,398.2 L376.6,395.5 L377.4,392.8 L378.3,390.1 L379.1,387.5 L380.1,384.8 L381.0,382.1 L382.0,379.5 L383.1,376.8 L384.2,374.1 L385.3,371.5 L386.4,368.9 L387.6,366.2 L388.9,363.6 L390.1,361.0 L391.4,358.4 L392.8,355.8 L394.2,353.2 L395.6,350.6 L397.0,348.1 L398.5,345.5 L400.0,343.0 L401.6,340.5 L403.2,337.9 L404.8,335.5 L406.5,333.0 L408.2,330.5 L409.9,328.1 L411.6,325.6 L413.4,323.2 L415.2,320.8 L417.1,318.5 L419.0,316.1 L420.9,313.8 L422.8,311.5 L424.8,309.2 L426.8,306.9 L428.8,304.7 L430.8,302.5 L432.9,300.3 L435.0,298.1 L437.2,295.9 L439.3,293.8 L441.5,291.7 L443.7,289.6 L445.9,287.6 L448.2,285.6 L450.4,283.6 L452.7,281.6 L455.0,279.7 L457.4,277.8 L459.7,275.9 L462.1,274.1 L464.5,272.3 L466.9,270.5 L469.3,268.8 L471.8,267.0 L474.2,265.4 L476.7,263.7 L479.2,262.1 L481.7,260.5 L484.3,259.0 L486.8,257.5 L489.4,256.0 L491.9,254.5 L494.5,253.1 L497.1,251.8 L499.7,250.4 L502.3,249.1 L504.9,247.9 L507.5,246.6 L510.1,245.5 L512.8,244.3 L515.4,243.2 L518.1,242.1 L520.7,241.1 L523.4,240.1 L526.1,239.1 L528.7,238.2 L531.4,237.4 L534.1,236.5 L536.7,235.7 L539.4,235.0 L542.1,234.3 L544.8,233.6 L547.4,232.9 L550.1,232.4 L552.8,231.8 L555.4,231.3 L558.1,230.8 L560.8,230.4 L563.4,230.0 L566.0,229.7 L568.7,229.4 L571.3,229.1 L573.9,228.9 L576.5,228.7 L579.1,228.6 L581.7,228.5 L584.3,228.5 L586.9,228.4 L589.4,228.5 L592.0,228.6 L594.5,228.7 L597.0,228.8 L599.5,229.0 L602.0,229.3 L604.5,229.6 L607.0,229.9 L609.4,230.3 L611.8,230.7 L614.2,231.1 L616.6,231.6 L619.0,232.2 L621.3,232.8 L623.7,233.4 L626.0,234.0 L628.3,234.7 L630.5,235.5 L632.8,236.3 L635.0,237.1 L637.2,238.0 L639.3,238.9 L641.5,239.8 L643.6,240.8 L645.7,241.8 L647.8,242.9 L649.8,244.0 L651.8,245.1 L653.8,246.3 L655.7,247.5 L657.7,248.7 L659.6,250.0 L661.4,251.3 L663.3,252.7 L665.1,254.1 L666.8,255.5 L668.6,257.0 L670.3,258.5 L672.0,260.0 L673.6,261.6Z" fill="#a7a7a7" stroke="#111" stroke-width="2.2"/>
<path d="M406.5,537.5 L403.3,534.2 L400.3,530.8 L397.4,527.3 L394.7,523.6 L392.1,519.8 L389.6,515.9 L387.3,511.8 L385.2,507.7 L383.2,503.4 L381.4,499.1 L379.7,494.7 L378.2,490.1 L376.9,485.5 L375.7,480.8 L374.7,476.0 L373.9,471.1 L373.2,466.2 L372.7,461.2 L372.3,456.2 L372.2,451.0 L372.2,445.9 L372.3,440.7 L372.7,435.4 L373.2,430.2 L373.9,424.9 L374.7,419.5 L375.7,414.2 L376.9,408.8 L378.2,403.5 L379.8,398.1 L381.4,392.7 L383.2,387.4 L385.2,382.0 L387.4,376.7 L389.7,371.4 L392.1,366.1 L394.7,360.9 L397.5,355.7 L400.3,350.6 L403.4,345.5 L406.5,340.4 L409.8,335.4 L413.3,330.5 L416.8,325.7 L420.5,320.9 L424.3,316.2 L428.3,311.6 L432.3,307.1 L436.5,302.7 L440.7,298.4 L445.1,294.2 L449.5,290.1 L454.1,286.1 L458.7,282.2 L463.4,278.4 L468.2,274.8 L473.1,271.2 L478.0,267.9 L483.0,264.6 L488.1,261.5 L493.2,258.5 L498.3,255.7 L503.5,253.0 L508.8,250.4 L514.0,248.1 L519.4,245.8 L524.7,243.7 L530.0,241.8 L535.4,240.0 L540.7,238.4 L546.1,237.0 L551.5,235.7 L556.8,234.6 L562.1,233.7 L567.5,232.9 L572.8,232.3 L578.0,231.8 L583.2,231.6 L588.4,231.4 L593.6,231.5 L598.6,231.7 L603.7,232.2 L608.6,232.7 L613.5,233.5 L618.4,234.4 L623.1,235.4 L627.8,236.7 L632.4,238.1 L636.9,239.7 L641.3,241.4 L645.6,243.3 L649.8,245.3 L653.9,247.5 L657.8,249.9 L661.7,252.4 L665.5,255.0 L669.1,257.8 L672.6,260.8 L675.9,263.9 L679.2,267.1 L682.3,270.5 L685.2,273.9 L688.0,277.6 L690.7,281.3 L693.2,285.1 L695.6,289.1 L697.8,293.2 L699.9,297.4 L701.8,301.7 L703.5,306.1 L705.1,310.6 L706.5,315.2 L707.8,319.8 L708.9,324.6 L709.8,329.4 L710.6,334.3 L711.2,339.3 L711.6,344.3 L711.8,349.4 L711.9,354.5 L711.8,359.7 L711.6,364.9 L711.1,370.2 L710.5,375.5 L709.8,380.8 L708.9,386.1 L707.8,391.5 L706.5,396.8 L705.1,402.2 L703.5,407.6 L701.7,412.9 L699.8,418.3 L697.8,423.6 L695.6,428.9 L693.2,434.2 L690.7,439.5 L688.0,444.7 L685.2,449.9 L682.2,455.0 L679.1,460.0 L675.9,465.1 L672.5,470.0 L669.0,474.9 L665.4,479.7 L661.6,484.4 L657.8,489.1 L653.8,493.6 L649.7,498.1 L645.5,502.5 L641.2,506.7 L636.8,510.9 L632.3,514.9 L627.7,518.9 L623.0,522.7 L618.3,526.4 L613.4,530.0 L608.5,533.4 L603.6,536.8 L598.5,539.9 L593.5,543.0 L588.3,545.9 L583.1,548.7 L577.9,551.3 L572.7,553.7 L567.4,556.1 L562.0,558.2 L556.7,560.2 L551.4,562.1 L546.0,563.8 L540.6,565.3 L535.3,566.6 L529.9,567.8 L524.6,568.9 L519.3,569.7 L513.9,570.4 L508.7,571.0 L503.4,571.3 L498.2,571.5 L493.1,571.5 L488.0,571.4 L482.9,571.1 L477.9,570.6 L473.0,569.9 L468.1,569.1 L463.3,568.1 L458.6,566.9 L454.0,565.6 L449.4,564.1 L445.0,562.5 L440.6,560.7 L436.4,558.7 L432.2,556.6 L428.2,554.3 L424.3,551.9 L420.5,549.3 L416.8,546.6 L413.2,543.7 L409.8,540.7 L406.5,537.5Z" fill="none" stroke="#1a1a1a" stroke-width="1.8"/>
<path d="M418.3,549.3 L415.1,546.0 L412.1,542.6 L409.2,539.0 L406.4,535.3 L403.8,531.5 L401.4,527.6 L399.1,523.6 L396.9,519.4 L394.9,515.1 L393.1,510.8 L391.4,506.3 L389.9,501.8 L388.5,497.1 L387.3,492.4 L386.3,487.6 L385.5,482.7 L384.8,477.8 L384.3,472.8 L383.9,467.7 L383.7,462.6 L383.7,457.4 L383.9,452.2 L384.2,447.0 L384.7,441.7 L385.4,436.3 L386.2,431.0 L387.2,425.7 L388.4,420.3 L389.7,414.9 L391.2,409.5 L392.9,404.1 L394.7,398.8 L396.7,393.4 L398.8,388.1 L401.1,382.8 L403.6,377.5 L406.2,372.3 L408.9,367.1 L411.8,361.9 L414.8,356.8 L418.0,351.8 L421.3,346.8 L424.7,341.9 L428.3,337.0 L432.0,332.2 L435.8,327.6 L439.7,323.0 L443.8,318.4 L447.9,314.0 L452.2,309.7 L456.5,305.5 L461.0,301.4 L465.5,297.4 L470.2,293.5 L474.9,289.7 L479.7,286.1 L484.6,282.6 L489.5,279.2 L494.5,275.9 L499.6,272.8 L504.7,269.8 L509.9,267.0 L515.1,264.3 L520.3,261.8 L525.6,259.4 L530.9,257.1 L536.2,255.1 L541.6,253.2 L547.0,251.4 L552.3,249.8 L557.7,248.4 L563.1,247.1 L568.4,246.0 L573.8,245.0 L579.1,244.3 L584.4,243.7 L589.7,243.2 L594.9,243.0 L600.1,242.9 L605.3,242.9 L610.4,243.2 L615.4,243.6 L620.4,244.2 L625.3,244.9 L630.1,245.9 L634.9,246.9 L639.6,248.2 L644.2,249.6 L648.7,251.2 L653.1,252.9 L657.4,254.8 L661.6,256.9 L665.8,259.1 L669.7,261.5 L673.6,264.0 L677.4,266.7 L681.0,269.5 L684.5,272.4 L687.9,275.5 L691.2,278.8 L694.3,282.1 L697.2,285.6 L700.1,289.3 L702.7,293.0 L705.3,296.9 L707.7,300.9 L709.9,305.0 L712.0,309.2 L713.9,313.5 L715.6,317.9 L717.2,322.4 L718.7,327.0 L719.9,331.7 L721.0,336.4 L722.0,341.3 L722.7,346.2 L723.3,351.2 L723.8,356.2 L724.0,361.3 L724.1,366.4 L724.0,371.6 L723.8,376.9 L723.4,382.2 L722.8,387.5 L722.0,392.8 L721.1,398.1 L720.0,403.5 L718.8,408.9 L717.4,414.2 L715.8,419.6 L714.0,425.0 L712.1,430.4 L710.1,435.7 L707.9,441.0 L705.5,446.3 L703.0,451.6 L700.3,456.8 L697.5,462.0 L694.5,467.1 L691.4,472.2 L688.2,477.2 L684.8,482.1 L681.3,487.0 L677.7,491.8 L674.0,496.6 L670.1,501.2 L666.1,505.8 L662.0,510.3 L657.8,514.6 L653.5,518.9 L649.1,523.1 L644.6,527.1 L640.0,531.1 L635.3,534.9 L630.6,538.6 L625.7,542.2 L620.8,545.6 L615.9,548.9 L610.8,552.1 L605.7,555.2 L600.6,558.1 L595.4,560.8 L590.2,563.4 L584.9,565.9 L579.6,568.2 L574.3,570.4 L568.9,572.4 L563.6,574.2 L558.2,575.9 L552.8,577.4 L547.5,578.8 L542.1,580.0 L536.7,581.0 L531.4,581.8 L526.1,582.5 L520.8,583.0 L515.5,583.4 L510.3,583.6 L505.2,583.6 L500.0,583.4 L495.0,583.1 L489.9,582.6 L485.0,581.9 L480.1,581.1 L475.3,580.1 L470.6,578.9 L465.9,577.6 L461.4,576.1 L456.9,574.4 L452.6,572.6 L448.3,570.6 L444.1,568.5 L440.1,566.2 L436.1,563.8 L432.3,561.2 L428.6,558.4 L425.1,555.5 L421.6,552.5 L418.3,549.3Z" fill="#8e8e8e" stroke="#1a1a1a" stroke-width="1.9"/>
<path d="M430.4,561.5 L427.2,558.2 L424.2,554.7 L421.3,551.1 L418.5,547.4 L415.9,543.6 L413.4,539.7 L411.1,535.6 L408.9,531.4 L406.9,527.2 L405.1,522.8 L403.4,518.3 L401.8,513.7 L400.5,509.1 L399.3,504.4 L398.3,499.5 L397.4,494.7 L396.7,489.7 L396.2,484.7 L395.8,479.6 L395.6,474.5 L395.6,469.3 L395.8,464.0 L396.1,458.8 L396.6,453.5 L397.2,448.1 L398.1,442.8 L399.1,437.4 L400.2,432.0 L401.6,426.7 L403.0,421.3 L404.7,415.9 L406.5,410.5 L408.5,405.1 L410.6,399.8 L412.9,394.5 L415.4,389.2 L417.9,384.0 L420.7,378.7 L423.6,373.6 L426.6,368.5 L429.8,363.4 L433.1,358.4 L436.5,353.5 L440.1,348.7 L443.7,343.9 L447.6,339.2 L451.5,334.6 L455.5,330.1 L459.7,325.6 L463.9,321.3 L468.3,317.1 L472.8,313.0 L477.3,309.0 L481.9,305.1 L486.7,301.3 L491.5,297.7 L496.3,294.2 L501.3,290.8 L506.3,287.5 L511.4,284.4 L516.5,281.4 L521.7,278.6 L526.9,275.9 L532.2,273.4 L537.5,271.0 L542.8,268.8 L548.1,266.7 L553.5,264.8 L558.9,263.0 L564.2,261.4 L569.6,260.0 L575.0,258.7 L580.4,257.6 L585.7,256.7 L591.1,255.9 L596.4,255.4 L601.7,254.9 L606.9,254.7 L612.1,254.6 L617.3,254.7 L622.4,254.9 L627.4,255.3 L632.4,255.9 L637.4,256.7 L642.2,257.6 L647.0,258.7 L651.7,260.0 L656.3,261.4 L660.8,263.0 L665.3,264.8 L669.6,266.7 L673.8,268.8 L677.9,271.0 L682.0,273.4 L685.9,275.9 L689.6,278.6 L693.3,281.4 L696.8,284.4 L700.2,287.5 L703.5,290.7 L706.6,294.1 L709.6,297.6 L712.4,301.3 L715.1,305.0 L717.6,308.9 L720.0,312.9 L722.3,317.0 L724.4,321.3 L726.3,325.6 L728.1,330.0 L729.7,334.5 L731.1,339.1 L732.4,343.8 L733.5,348.6 L734.5,353.5 L735.2,358.4 L735.8,363.4 L736.3,368.4 L736.6,373.5 L736.7,378.7 L736.6,383.9 L736.4,389.2 L736.0,394.4 L735.4,399.8 L734.6,405.1 L733.7,410.5 L732.6,415.8 L731.4,421.2 L730.0,426.6 L728.4,432.0 L726.7,437.4 L724.8,442.7 L722.7,448.1 L720.5,453.4 L718.1,458.7 L715.6,464.0 L713.0,469.2 L710.2,474.4 L707.2,479.5 L704.1,484.6 L700.9,489.6 L697.5,494.6 L694.0,499.5 L690.4,504.3 L686.6,509.0 L682.8,513.7 L678.8,518.3 L674.7,522.7 L670.5,527.1 L666.2,531.4 L661.7,535.6 L657.2,539.6 L652.6,543.6 L648.0,547.4 L643.2,551.1 L638.4,554.7 L633.4,558.1 L628.5,561.4 L623.4,564.6 L618.3,567.7 L613.2,570.6 L608.0,573.3 L602.7,575.9 L597.5,578.4 L592.2,580.7 L586.8,582.8 L581.5,584.8 L576.1,586.7 L570.7,588.4 L565.3,589.9 L559.9,591.2 L554.6,592.4 L549.2,593.4 L543.9,594.3 L538.5,594.9 L533.2,595.4 L528.0,595.8 L522.7,596.0 L517.6,596.0 L512.4,595.8 L507.3,595.4 L502.3,594.9 L497.4,594.3 L492.5,593.4 L487.6,592.4 L482.9,591.2 L478.2,589.9 L473.7,588.4 L469.2,586.7 L464.8,584.9 L460.5,582.9 L456.4,580.7 L452.3,578.4 L448.3,576.0 L444.5,573.3 L440.8,570.6 L437.2,567.7 L433.7,564.6 L430.4,561.5Z" fill="#9c9c9c" stroke="#1a1a1a" stroke-width="1.9"/>
<path d="M432.0,563.0 L428.8,559.7 L425.7,556.3 L422.8,552.7 L420.0,549.0 L417.4,545.1 L414.9,541.2 L412.6,537.1 L410.5,533.0 L408.4,528.7 L406.6,524.3 L404.9,519.8 L403.4,515.3 L402.0,510.6 L400.8,505.9 L399.8,501.1 L398.9,496.2 L398.2,491.2 L397.7,486.2 L397.3,481.1 L397.1,476.0 L397.1,470.8 L397.3,465.6 L397.6,460.3 L398.1,455.0 L398.8,449.7 L399.6,444.3 L400.6,438.9 L401.7,433.6 L403.1,428.2 L404.6,422.8 L406.2,417.4 L408.0,412.0 L410.0,406.6 L412.1,401.3 L414.4,396.0 L416.9,390.7 L419.5,385.5 L422.2,380.2 L425.1,375.1 L428.1,370.0 L431.3,364.9 L434.6,359.9 L438.0,355.0 L441.6,350.1 L445.3,345.4 L449.1,340.7 L453.0,336.1 L457.0,331.5 L461.2,327.1 L465.4,322.8 L469.8,318.6 L474.3,314.5 L478.8,310.5 L483.5,306.6 L488.2,302.8 L493.0,299.2 L497.9,295.6 L502.8,292.3 L507.8,289.0 L512.9,285.9 L518.0,282.9 L523.2,280.1 L528.4,277.4 L533.7,274.9 L539.0,272.5 L544.3,270.3 L549.6,268.2 L555.0,266.3 L560.4,264.5 L565.8,262.9 L571.1,261.5 L576.5,260.2 L581.9,259.1 L587.3,258.2 L592.6,257.4 L597.9,256.9 L603.2,256.4 L608.5,256.2 L613.7,256.1 L618.8,256.2 L623.9,256.4 L629.0,256.9 L634.0,257.5 L638.9,258.2 L643.8,259.1 L648.6,260.2 L653.3,261.5 L657.9,262.9 L662.4,264.5 L666.8,266.3 L671.2,268.2 L675.4,270.3 L679.5,272.5 L683.5,274.9 L687.4,277.4 L691.2,280.1 L694.8,282.9 L698.4,285.9 L701.8,289.0 L705.0,292.3 L708.2,295.7 L711.1,299.2 L714.0,302.8 L716.7,306.6 L719.2,310.5 L721.6,314.5 L723.9,318.6 L726.0,322.8 L727.9,327.1 L729.7,331.6 L731.3,336.1 L732.7,340.7 L734.0,345.4 L735.1,350.2 L736.1,355.0 L736.8,359.9 L737.5,364.9 L737.9,370.0 L738.2,375.1 L738.3,380.3 L738.2,385.5 L738.0,390.7 L737.6,396.0 L737.0,401.3 L736.2,406.7 L735.3,412.0 L734.3,417.4 L733.0,422.8 L731.6,428.2 L730.0,433.6 L728.3,439.0 L726.4,444.3 L724.3,449.7 L722.1,455.0 L719.8,460.3 L717.2,465.6 L714.6,470.8 L711.8,476.0 L708.8,481.1 L705.7,486.2 L702.5,491.2 L699.1,496.2 L695.6,501.1 L692.0,505.9 L688.3,510.6 L684.4,515.3 L680.4,519.9 L676.3,524.3 L672.1,528.7 L667.8,533.0 L663.4,537.2 L658.9,541.2 L654.3,545.2 L649.6,549.0 L644.8,552.7 L640.0,556.3 L635.1,559.7 L630.1,563.0 L625.0,566.2 L619.9,569.3 L614.8,572.2 L609.6,574.9 L604.3,577.5 L599.1,580.0 L593.8,582.3 L588.4,584.4 L583.1,586.4 L577.7,588.3 L572.3,589.9 L566.9,591.5 L561.6,592.8 L556.2,594.0 L550.8,595.0 L545.5,595.8 L540.1,596.5 L534.8,597.0 L529.6,597.4 L524.3,597.5 L519.1,597.5 L514.0,597.4 L508.9,597.0 L503.9,596.5 L498.9,595.8 L494.0,595.0 L489.2,594.0 L484.5,592.8 L479.8,591.5 L475.2,589.9 L470.8,588.3 L466.4,586.4 L462.1,584.4 L457.9,582.3 L453.9,580.0 L449.9,577.5 L446.1,574.9 L442.4,572.2 L438.8,569.3 L435.3,566.2 L432.0,563.0Z" fill="#a7a7a7" stroke="#1a1a1a" stroke-width="1.7"/>
<path d="M434.5,565.5 L431.3,562.2 L428.2,558.7 L425.3,555.2 L422.5,551.4 L419.9,547.6 L417.4,543.7 L415.1,539.6 L412.9,535.4 L410.9,531.2 L409.1,526.8 L407.4,522.3 L405.8,517.7 L404.5,513.1 L403.3,508.3 L402.2,503.5 L401.4,498.6 L400.7,493.7 L400.1,488.6 L399.8,483.5 L399.6,478.4 L399.6,473.2 L399.7,468.0 L400.0,462.7 L400.5,457.4 L401.2,452.1 L402.0,446.7 L403.0,441.3 L404.2,436.0 L405.5,430.6 L407.0,425.2 L408.6,419.8 L410.5,414.4 L412.4,409.0 L414.6,403.7 L416.8,398.4 L419.3,393.1 L421.9,387.8 L424.6,382.6 L427.5,377.5 L430.5,372.4 L433.7,367.3 L437.0,362.3 L440.4,357.4 L444.0,352.5 L447.7,347.8 L451.5,343.1 L455.4,338.4 L459.4,333.9 L463.6,329.5 L467.9,325.2 L472.2,320.9 L476.7,316.8 L481.2,312.8 L485.9,308.9 L490.6,305.2 L495.4,301.5 L500.3,298.0 L505.2,294.6 L510.2,291.4 L515.3,288.3 L520.4,285.3 L525.6,282.5 L530.8,279.8 L536.1,277.3 L541.4,274.9 L546.7,272.7 L552.1,270.6 L557.4,268.7 L562.8,266.9 L568.2,265.3 L573.6,263.9 L579.0,262.6 L584.4,261.5 L589.7,260.6 L595.1,259.8 L600.4,259.3 L605.7,258.8 L610.9,258.6 L616.1,258.5 L621.3,258.6 L626.4,258.8 L631.5,259.3 L636.5,259.9 L641.4,260.6 L646.3,261.6 L651.0,262.7 L655.7,263.9 L660.4,265.4 L664.9,267.0 L669.3,268.7 L673.7,270.6 L677.9,272.7 L682.0,274.9 L686.0,277.3 L689.9,279.9 L693.7,282.6 L697.4,285.4 L700.9,288.4 L704.3,291.5 L707.6,294.7 L710.7,298.1 L713.7,301.6 L716.5,305.3 L719.2,309.1 L721.8,312.9 L724.2,316.9 L726.4,321.1 L728.5,325.3 L730.4,329.6 L732.2,334.0 L733.8,338.6 L735.3,343.2 L736.6,347.9 L737.7,352.7 L738.6,357.5 L739.4,362.5 L740.0,367.4 L740.5,372.5 L740.7,377.6 L740.8,382.8 L740.8,388.0 L740.5,393.2 L740.1,398.5 L739.6,403.9 L738.8,409.2 L737.9,414.6 L736.8,419.9 L735.6,425.3 L734.2,430.7 L732.6,436.1 L730.9,441.5 L729.0,446.9 L726.9,452.2 L724.7,457.6 L722.4,462.9 L719.8,468.1 L717.2,473.4 L714.4,478.6 L711.4,483.7 L708.3,488.8 L705.1,493.8 L701.7,498.8 L698.2,503.7 L694.6,508.5 L690.8,513.2 L687.0,517.9 L683.0,522.4 L678.9,526.9 L674.7,531.3 L670.4,535.6 L666.0,539.7 L661.5,543.8 L656.9,547.7 L652.2,551.6 L647.4,555.3 L642.6,558.8 L637.7,562.3 L632.7,565.6 L627.6,568.8 L622.5,571.8 L617.4,574.7 L612.2,577.5 L606.9,580.1 L601.6,582.5 L596.3,584.9 L591.0,587.0 L585.6,589.0 L580.3,590.8 L574.9,592.5 L569.5,594.0 L564.1,595.4 L558.7,596.5 L553.4,597.6 L548.0,598.4 L542.7,599.1 L537.4,599.6 L532.1,599.9 L526.9,600.1 L521.7,600.1 L516.5,599.9 L511.5,599.6 L506.4,599.1 L501.5,598.4 L496.6,597.5 L491.7,596.5 L487.0,595.3 L482.3,594.0 L477.8,592.5 L473.3,590.8 L468.9,588.9 L464.6,586.9 L460.4,584.8 L456.4,582.5 L452.4,580.0 L448.6,577.4 L444.9,574.7 L441.3,571.7 L437.8,568.7 L434.5,565.5Z" fill="#a7a7a7" stroke="#111" stroke-width="2"/>
<path d="M598.0,286.7 C626.0,287.0 651.0,292.0 668.4,302.4 C674.0,312.0 677.0,324.0 678.2,334.0 L604.0,354.0 L598.0,356.0 Z" fill="url(#bg)" stroke="#111" stroke-width="1.9"/>
<path d="M668.4,302.4 C686.0,318.0 701.0,340.0 709.5,364.0 L694.0,350.0 L678.2,334.0 C677.0,324.0 674.0,312.0 668.4,302.4Z" fill="#8a8a8a" stroke="#111" stroke-width="1.7"/>
<path d="M604.0,354.0 L678.2,334.0 L694.0,350.0 L633.0,365.5Z" fill="#8e8e8e" stroke="#111" stroke-width="1.8"/>
<path d="M633.0,365.5 L694.0,350.0 L709.5,364.0 L648.0,380.5Z" fill="#909090" stroke="#111" stroke-width="1.8"/>
<path d="M678.2,334.0 C683.0,324.0 687.0,330.0 694.0,350.0" stroke="#333" stroke-width="1" fill="none"/>
<path d="M541.1,302.5 C521.0,310.0 503.0,325.0 493.0,335.2 C476.0,352.0 456.0,378.0 445.4,397.0 L504.5,382.8 L511.6,374.4 L511.6,319.8 Z" fill="#c0ffc0" stroke="#111" stroke-width="1.8"/>
<path d="M493.0,335.2 L501.0,343.0 L511.6,332.0 M501.0,343.0 L459.0,395.0" stroke="#1ef01e" stroke-width="1.8" fill="none"/>
<path d="M511.6,319.8 L541.1,302.5 L541.1,364.8 L521.2,382.8 L511.6,374.4Z" fill="#8a8a8a" stroke="#111" stroke-width="1.8"/>
<path d="M525.7,312.0 L525.7,380.6" stroke="#111" stroke-width="1.9"/>
<path d="M517.0,317.0 L521.0,350.0 L514.0,365.0" stroke="#9e9e9e" stroke-width="3" fill="none"/>
<path d="M445.4,397.0 L504.5,382.8 L521.2,382.8 L509.7,399.5 L436.4,418.8Z" fill="#8c8c8c" stroke="#111" stroke-width="1.8"/>
<path d="M436.4,418.8 L509.7,399.5 L511.0,415.0 L489.1,424.5 L430.0,440.6 C431.0,433.0 433.0,426.0 436.4,418.8Z" fill="#8e8e8e" stroke="#111" stroke-width="1.8"/>
<path d="M511.6,374.4 L521.2,382.8" stroke="#111" stroke-width="1.8"/>
<path d="M710.5,418.5 C709.0,440.0 701.0,465.0 678.0,492.0 C656.0,520.0 626.0,542.0 598.5,555.0 L598.5,520.0 L674.0,428.0Z" fill="#8e8e8e" stroke="#111" stroke-width="1.9"/>
<path d="M598.5,542.0 C641.0,520.0 681.0,480.0 701.0,421.0" stroke="#222" stroke-width="1.8" fill="none"/>
<path d="M606.0,530.0 C646.0,508.0 671.0,475.0 688.0,424.0" stroke="#444" stroke-width="1" fill="none"/>
<path d="M616.0,520.0 C651.0,498.0 669.0,470.0 681.0,426.0" stroke="#222" stroke-width="1.8" fill="none"/>
<path d="M382.0,596.0 L562.0,596.0 L563.0,1126.0 L383.0,1126.0Z" fill="url(#pipe)"/>
<path d="M409.5,740.0 L409.5,1126.0 M412.0,760.0 L412.0,1126.0 M534.0,740.0 L534.0,1126.0 M530.0,760.0 L530.0,1126.0" stroke="#555" stroke-width="1" stroke-dasharray="9 5 4 7" opacity=".6"/>
<path d="M416.0,780.0 L416.0,1126.0 M525.0,780.0 L525.0,1126.0 M420.0,830.0 L420.0,1126.0" stroke="#666" stroke-width="1" stroke-dasharray="14 9 5 11" opacity=".45"/>
<path d="M407.0,625.0 L536.0,625.0 L536.0,720.0 C521.0,745.0 491.0,755.0 471.0,755.0 C446.0,755.0 416.0,742.0 407.0,720.0Z" fill="url(#ginner)" opacity=".95"/>
<path d="M407.0,625.0 L407.0,720.0 C416.0,742.0 446.0,755.0 471.0,755.0 C491.0,755.0 521.0,745.0 536.0,720.0 L536.0,645.0" stroke="#4ee04e" stroke-width="1.3" fill="none"/>
<ellipse cx="499.5" cy="697" rx="10.5" ry="15" transform="rotate(35 499.5 697)" fill="none" stroke="#5ed85e" stroke-width="1.3"/>
<ellipse cx="502" cy="695" rx="9" ry="13" transform="rotate(35 502 695)" fill="none" stroke="#7ad07a" stroke-width="1" opacity=".7"/>
<path d="M380.7,503.0 L380.7,609.5 C396.0,640.0 431.0,659.7 468.4,659.7 C511.0,659.7 546.0,640.0 561.4,612.5 L561.4,570.0 L581.0,560.0 L598.5,528.0 L538.0,417.7 L526.0,380.0 L410.5,522.0 L396.0,540.0 Z" fill="url(#gcyl)"/>
<path d="M380.7,609.5 C396.0,640.0 431.0,659.7 468.4,659.7 C511.0,659.7 546.0,640.0 561.4,612.5" stroke="#111" stroke-width="1.8" stroke-dasharray="7 1" fill="none"/>
<path d="M380.7,503.0 L410.5,540.0 L410.7,575.0 L380.7,575.0Z" fill="#c8ffc8"/>
<path d="M380.7,575.0 L410.7,575.0 L410.7,606.5 C399.0,602.0 387.0,590.0 380.7,575.0Z" fill="#78f078"/>
<path d="M380.7,503.0 L380.7,609.5 M380.7,575.0 L410.7,575.0 M410.7,540.0 L410.7,606.5 M380.7,575.0 C387.0,590.0 399.0,602.0 410.7,606.5" stroke="#1ef01e" stroke-width="1.8" fill="none"/>
<path d="M410.5,522.0 L530.7,372.7 L554.7,396.0 C546.0,405.0 541.0,412.0 538.0,417.5 C511.0,460.0 461.0,510.0 410.5,522.0Z" fill="#a8ffa8"/>
<path d="M530.7,372.7 C546.0,360.0 566.0,350.0 588.5,350.2 C611.0,350.0 633.0,362.0 648.4,379.5 C626.0,374.0 601.0,372.0 554.7,396.0Z" fill="url(#gtop)"/>
<path d="M554.7,396.0 C581.0,377.0 616.0,370.0 648.4,380.0 C661.0,390.0 671.0,405.0 672.4,435.0 C673.0,455.0 669.0,470.0 665.0,474.0 C656.0,490.0 646.0,500.0 641.0,504.0 C626.0,516.0 611.0,520.0 599.0,526.4 L538.0,637.0 L538.0,417.7 C543.0,410.0 548.0,402.0 554.7,396.0Z" fill="#c0ffc0"/>
<path d="M410.5,522.0 L530.7,372.7 C546.0,360.0 566.0,350.0 588.5,350.2 C611.0,350.0 633.0,362.0 648.4,379.5 C661.0,390.0 671.0,405.0 672.4,435.0 C673.0,455.0 669.0,470.0 665.0,474.0 C656.0,490.0 646.0,500.0 641.0,504.0 C626.0,516.0 611.0,520.0 599.0,526.4 L538.0,637.0" stroke="#1ef01e" stroke-width="2" fill="none"/>
<path d="M530.7,372.7 L554.7,396.0 C581.0,377.0 616.0,370.0 648.4,380.0 M554.7,396.0 C548.0,402.0 543.0,410.0 538.0,417.7 L538.0,637.0 M538.0,417.5 C511.0,460.0 461.0,510.0 410.5,522.0 L410.5,606.0" stroke="#1ef01e" stroke-width="1.8" fill="none"/>
<ellipse cx="594" cy="453" rx="16" ry="13" transform="rotate(-42 594 453)" fill="#a4fca4" stroke="#22f822" stroke-width="2"/>
<path d="M599.0,439.0 L607.0,446.0" stroke="#60e060" stroke-width="2.5"/>
<path d="M598.0,349.0 L598.0,342.0 C606.0,346.0 611.0,350.0 613.0,352.0Z" fill="#c0ffc0"/>
<path d="M22.6,954.5 L306.8,876.5 L455.5,1023.6 L455.5,1126.0 L22.6,1126.0Z" fill="#8a8a94" opacity=".45"/>
<path d="M48.6,958.8 L300.2,890.7 L430.0,1020.3 L178.8,1088.3Z" fill="#a0a0a8" opacity=".45"/>
<path d="M48.6,958.8 L178.8,1088.3 L178.8,1126.0 L48.6,1126.0Z" fill="#5a5a60" opacity=".35"/>
<path d="M300.2,890.7 L430.0,1020.3 L430.0,1126.0 L300.2,1126.0Z" fill="#5a5a62" opacity=".3"/>
<path d="M22.6,954.5 L48.6,958.8 L48.6,1126.0 L22.6,1126.0Z" fill="#70707a" opacity=".2"/>
<path d="M178.8,1088.3 L300.5,1055.0 L308.9,1052.0 L308.9,1126.0 L178.8,1126.0Z" fill="#c0c0c6" opacity=".35"/>
<path d="M178.8,1103.3 L288.0,1073.0 M61.0,1146.0 L297.8,1082.9 M101.0,1152.0 L309.0,1094.0 M178.8,1088.3 L41.0,1125.0 M277.4,1064.0 L288.7,1073.0 L288.7,1126.0 M277.4,1064.0 L277.4,1126.0 M297.8,1082.9 L309.0,1094.0 M297.8,1082.9 L297.8,1126.0" stroke="#6a6a6e" stroke-width="1.6" fill="none" opacity=".85"/>
<circle cx="235" cy="1117" r="17" fill="none" stroke="#888" stroke-width="1.3"/>
<circle cx="259" cy="1130" r="14" fill="none" stroke="#777" stroke-width="1.6"/>
<path d="M22.6,954.5 L306.8,876.5 M306.8,876.5 L455.5,1023.6 M455.5,1023.6 L170.8,1102.0 M170.8,1102.0 L22.6,954.5 M48.6,958.8 L300.2,890.7 M300.2,890.7 L430.0,1020.3 M430.0,1020.3 L178.8,1088.3 M178.8,1088.3 L48.6,958.8 M22.6,954.5 L22.6,1126.0 M48.6,958.8 L48.6,1126.0 M170.8,1102.0 L170.8,1126.0 M178.8,1088.3 L178.8,1126.0 M306.8,876.5 L306.8,1052.0 M300.2,890.7 L300.2,1058.0 M455.5,1023.6 L455.5,1126.0 M430.0,1020.3 L430.0,1126.0" stroke="#141414" stroke-width="2" fill="none"/>
<path d="M300.5,1058.0 L300.5,1126.0 M308.5,1052.0 L308.5,1126.0" stroke="#505054" stroke-width="1.8" fill="none"/>
<path d="M1008.0,19.0 L1030.0,19.0 L1019.0,7.2Z" fill="#8c8fb0"/>
<path d="M953.0,73.0 L965.0,61.7 L965.0,84.0Z" fill="#8c8fb0"/>
<path d="M1085.0,73.0 L1073.2,61.7 L1073.2,84.0Z" fill="#8c8fb0"/>
<path d="M1008.0,127.4 L1030.0,127.4 L1019.0,138.7Z" fill="#8c8fb0"/>
<circle cx="1079.1" cy="12.699999999999989" r="6" fill="#8c8fb0"/>
<path d="M1001.0,16.0 C991.0,20.0 981.0,27.0 973.0,36.0" stroke="#8c8fb0" stroke-width="6.5" fill="none"/>
<path d="M969.8,41.7 L982.0,37.5 L971.0,28.0Z" fill="#8c8fb0"/>
<path d="M1037.0,16.0 C1047.0,20.0 1057.0,27.0 1065.0,36.0" stroke="#8c8fb0" stroke-width="6.5" fill="none"/>
<path d="M1068.2,42.5 L1055.0,37.5 L1066.0,28.0Z" fill="#8c8fb0"/>
<path d="M984.4,52.5 L991.4,44.5 L1026.7,38.4 L1050.5,50.9 L1055.7,58.0 L1055.7,61.5 L1050.8,96.2 L1012.6,112.2 L1005.0,111.0 L1002.3,108.4 L989.0,83.0 L985.6,56.0Z" fill="#b9bdd3" stroke="#1e1e1e" stroke-width="1.1"/>
<path d="M991.4,44.5 L1026.7,38.4 L1050.5,50.9 L1007.5,60.8Z" fill="#bcc0d6" stroke="#1e1e1e" stroke-width="1"/>
<path d="M984.4,52.5 L991.4,44.5 L1007.5,60.8 L999.8,70.5Z" fill="#a9adc6" stroke="#1e1e1e" stroke-width="1"/>
<path d="M1007.5,60.8 L1050.5,50.9 L1055.7,61.5 L1010.7,72.4Z" fill="#bfc2d8" stroke="#1e1e1e" stroke-width="1"/>
<path d="M999.8,70.5 L1007.5,60.8 L1010.7,72.4Z" fill="#b0b4cc" stroke="#2a2a40" stroke-width="1"/>
<path d="M1010.7,72.4 L1055.7,61.5 L1050.8,96.2 L1012.6,112.2Z" fill="#bbbfd5" stroke="#1e1e1e" stroke-width="1.1"/>
<path d="M999.8,70.5 L1010.7,72.4 L1012.6,112.2 L1002.3,108.4Z" fill="#b5b9cf" stroke="#1e1e1e" stroke-width="1"/>
<text x="1020.5" y="96" font-family="Liberation Sans" font-weight="bold" font-style="italic" font-size="10.5" fill="#1a1a1a" textLength="26" lengthAdjust="spacingAndGlyphs" transform="rotate(-17 1020.5 96)">FRONT</text>
<ellipse cx="1018.5" cy="47.5" rx="8" ry="2.5" transform="rotate(-12 1018.5 47.5)" fill="#555" opacity=".75"/>
<path d="M990.5,73.0 L994.0,83.0" stroke="#666" stroke-width="1.5"/>
<path d="M1004.5,124.0 L1043.8,108.0" stroke="#ff0000" stroke-width="1.6"/>
<path d="M1004.5,124.0 L990.5,97.1" stroke="#00ff00" stroke-width="1.6"/>
<path d="M1004.5,124.0 L1001.0,85.9" stroke="#0000ff" stroke-width="1.6"/>
<path d="M1042.0,117.0 L1052.0,113.5 L1062.0,117.0 L1062.0,128.0 L1052.0,132.0 L1042.0,128.0Z" fill="#8587a6"/>
<path d="M1042.0,117.0 L1052.0,120.5 L1062.0,117.0 L1052.0,113.5Z" fill="#9193b0"/>
<path d="M1067.0,121.0 L1078.0,121.0 L1072.5,127.0Z" fill="#3a3d62"/>
<path d="M1037.4,1070.8 L1037.4,1048.0" stroke="#22228a" stroke-width="2.5"/>
<path d="M1033.5,1048.5 L1041.3,1048.5 L1037.4,1034.0Z" fill="#22228a"/>
<path d="M1037.4,1070.8 L1027.0,1061.0" stroke="#228822" stroke-width="2.5"/>
<path d="M1023.2,1057.5 L1031.0,1060.5 L1026.5,1065.0Z" fill="#228822"/>
<path d="M1037.4,1070.8 L1057.0,1065.0" stroke="#882222" stroke-width="2"/>
<path d="M1067.0,1063.2 L1056.0,1062.0 L1058.0,1068.5Z" fill="#882222"/>
<text x="1038" y="1034" font-family="Liberation Sans" font-size="9" fill="#000">Z</text>
<text x="1023.5" y="1056" font-family="Liberation Sans" font-size="9" fill="#000">Y</text>
<text x="1067.5" y="1062.5" font-family="Liberation Sans" font-size="9" fill="#000">X</text>
</svg>
<div class="a" style="left:354px;top:1246px;width:1098px;height:29px;background:#f0f0f0"></div>
<div class="a" style="left:353px;top:120px;width:6px;height:1126px;background:#f0f0f0"></div>
<div class="a" style="left:357px;top:120px;width:2px;height:1126px;background:#fbfbfb"></div>
<div class="a" style="left:362px;top:1247px;width:134px;height:20px;background:#f3f3f3;border:1px solid #e3e3e3;border-top:none"></div>
<div class="a" style="left:495px;top:1247px;width:131px;height:22px;background:#fbfbfb;border:1px solid #e3e3e3;border-top:none"></div>
<svg class="a" style="left:370px;top:1250px" width="17" height="16" viewBox="0 0 17 16"><path d="M1 1h7v2.6H3.8v2.6H7.5v2.6H3.8V15H1z" fill="#e01818"/><g transform="translate(11.5 10.5)"><circle r="4.2" fill="#4a7cc0"/><path d="M0-5.5v2M0 5.5v-2M-5.5 0h2M5.5 0h-2M-3.9-3.9l1.4 1.4M3.9 3.9l-1.4-1.4M-3.9 3.9l1.4-1.4M3.9-3.9l-1.4 1.4" stroke="#4a7cc0" stroke-width="2"/><circle r="1.6" fill="#fff"/></g></svg>
<div class="a t" style="left:390px;top:1250.8px;font-size:11px;letter-spacing:-0.2px">Úvodní stránka</div>
<svg class="a" style="left:467px;top:1250px" width="14" height="14" viewBox="0 0 14 14"><rect x=".5" y=".5" width="13" height="13" rx="1.5" fill="#c8c8c8" stroke="#b0b0b0"/><path d="M4 4l6 6M10 4l-6 6" stroke="#fff" stroke-width="1.8"/></svg>
<svg class="a" style="left:506px;top:1250px" width="17" height="16" viewBox="0 0 17 16"><path d="M1 1h7v2.6H3.8v2.6H7.5v2.6H3.8V15H1z" fill="#e01818"/><g transform="translate(11.5 10.5)"><circle r="4.2" fill="#4a7cc0"/><path d="M0-5.5v2M0 5.5v-2M-5.5 0h2M5.5 0h-2M-3.9-3.9l1.4 1.4M3.9 3.9l-1.4-1.4M-3.9 3.9l1.4-1.4M3.9-3.9l-1.4 1.4" stroke="#4a7cc0" stroke-width="2"/><circle r="1.6" fill="#fff"/></g></svg>
<div class="a t" style="left:526px;top:1251.8px;font-size:11px;letter-spacing:-0.25px">Al_holding : 1</div>
<svg class="a" style="left:596px;top:1250px" width="14" height="14" viewBox="0 0 14 14"><rect x=".5" y=".5" width="13" height="13" rx="1.5" fill="#e0704a" stroke="#c05030"/><path d="M4 4l6 6M10 4l-6 6" stroke="#fff" stroke-width="1.8"/></svg>
<div class="a" style="left:1px;top:1275px;width:1450px;height:1px;background:#bdbdbd"></div>
<div class="a" style="left:1px;top:1276px;width:1450px;height:17px;background:#dadada"></div>
<div class="a" style="left:1px;top:1293px;width:1450px;height:1px;background:#bdbdbd"></div>
<div class="a" style="left:1px;top:1294px;width:1450px;height:2px;background:#f3f3f3"></div>
<div class="a" style="left:2px;top:1296px;width:1448px;height:69px;background:#fff"></div>
<div class="a t" style="left:6px;top:1278.8px;">Zobrazení reportu</div>
<svg class="a" style="left:1412px;top:1279px" width="11" height="11" viewBox="0 0 11 11"><path d="M3.5 0.5h7v7h-2M0.5 3.5h7v7h-7z" stroke="#222" fill="none" stroke-width="1.2"/><path d="M3.5 1.5h7" stroke="#222" stroke-width="1.5"/></svg>
<svg class="a" style="left:1434px;top:1280px" width="10" height="10" viewBox="0 0 10 10"><path d="M1 1l8 8M9 1l-8 8" stroke="#222" stroke-width="1.6"/></svg>
<div class="a" style="left:0px;top:0px;width:1px;height:86px;background:#25252b"></div>
<div class="a" style="left:0px;top:86px;width:1px;height:1279px;background:#ababab"></div>
<div class="a" style="left:1451px;top:0px;width:1px;height:31px;background:#2a2a30"></div>
<div class="a" style="left:1451px;top:31px;width:1px;height:294px;background:#c4c4c4"></div>
<div class="a" style="left:1451px;top:325px;width:1px;height:1040px;background:#3c3c3c"></div>
<div class="a" style="left:1451px;top:1246px;width:1px;height:119px;background:#a8a8a8"></div>
<div class="a" style="left:0px;top:1365px;width:1452px;height:36px;background:#232323"></div>
<div class="a" style="left:43px;top:1368px;width:38px;height:33px;background:#303030;border-radius:4px"></div>
<svg class="a" style="left:6px;top:1374px" width="22" height="22" viewBox="0 0 22 22"><path d="M5 3l15 3-3 15-15-3z" fill="#c9d2dc"/><path d="M10 10l4 1-1 4-4-1z" fill="#222"/></svg>
<svg class="a" style="left:48px;top:1374px" width="26" height="26" viewBox="0 0 26 26"><path d="M2 2h10v4H6v4h5v4H6v8H2z" fill="#ff3010"/><g transform="translate(17 16)"><circle r="5.5" fill="#2a60e0"/><path d="M0-8v3M0 8v-3M-8 0h3M8 0h-3M-5.7-5.7l2 2M5.7 5.7l-2-2M-5.7 5.7l2-2M5.7-5.7l-2 2" stroke="#2a60e0" stroke-width="3"/><circle r="2.2" fill="#222"/></g></svg>
<svg class="a" style="left:92px;top:1376px" width="25" height="25" viewBox="0 0 25 25"><circle cx="12.5" cy="12.5" r="11.5" fill="#fff"/><circle cx="12.5" cy="12.5" r="8" fill="#2b2b2b"/><path d="M18 6L8 19a8 8 0 0 0 10-13z" fill="#f07020"/><path d="M19 5L7 20" stroke="#fff" stroke-width="1.5"/></svg>
</div>
</body></html>
